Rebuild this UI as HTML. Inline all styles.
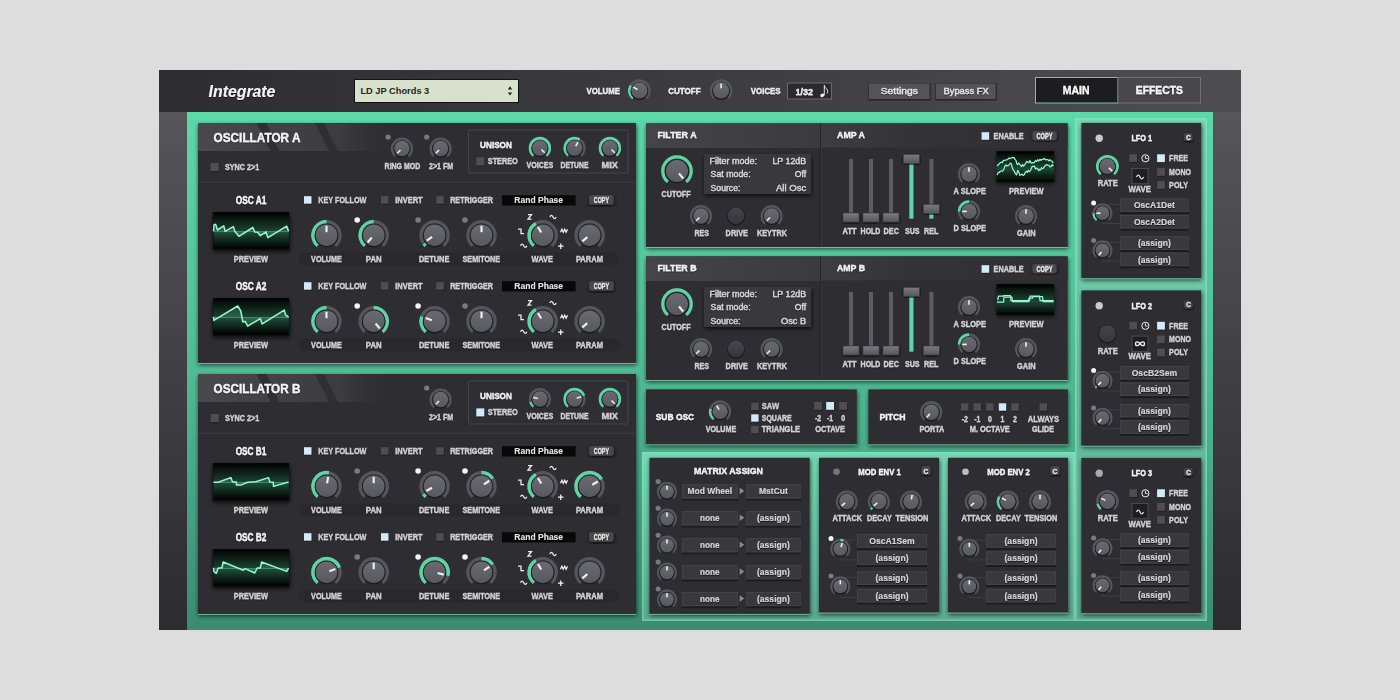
<!DOCTYPE html><html><head><meta charset="utf-8"><style>html,body{margin:0;padding:0;background:#dddddd;overflow:hidden}</style></head><body><svg width="1400" height="700" viewBox="0 0 1400 700" style="display:block;font-family:'Liberation Sans',sans-serif">
<defs>
<linearGradient id="hdr" x1="0" x2="1" y1="0" y2="0"><stop offset="0" stop-color="#2d2c30"/><stop offset="0.45" stop-color="#3b3a3f"/><stop offset="1" stop-color="#4e4e52"/></linearGradient>
<linearGradient id="strip" x1="0" x2="0" y1="0" y2="1"><stop offset="0" stop-color="#55555a"/><stop offset="1" stop-color="#2c2b2f"/></linearGradient>
<linearGradient id="grn" x1="0" x2="0" y1="0" y2="1"><stop offset="0" stop-color="#5cd8a9"/><stop offset="0.5" stop-color="#50bb95"/><stop offset="1" stop-color="#3a8c70"/></linearGradient>
<linearGradient id="grn2" x1="0" x2="0" y1="0" y2="1"><stop offset="0" stop-color="#72d9b3"/><stop offset="1" stop-color="#5caa91"/></linearGradient>
<linearGradient id="kb" x1="0" x2="0" y1="0" y2="1"><stop offset="0" stop-color="#6a6a72"/><stop offset="1" stop-color="#58585f"/></linearGradient>
<linearGradient id="kbd" x1="0" x2="0" y1="0" y2="1"><stop offset="0" stop-color="#45454b"/><stop offset="1" stop-color="#35353a"/></linearGradient>
<linearGradient id="prev" x1="0" x2="0" y1="0" y2="1"><stop offset="0" stop-color="#000"/><stop offset="0.52" stop-color="#1c4232"/><stop offset="0.56" stop-color="#1e4a38"/><stop offset="1" stop-color="#000"/></linearGradient>
<linearGradient id="prev2" x1="0" x2="0" y1="0" y2="1"><stop offset="0" stop-color="#000"/><stop offset="0.6" stop-color="#0c2a1f"/><stop offset="1" stop-color="#12392b"/></linearGradient>
<linearGradient id="oschdr" x1="0" x2="1" y1="0" y2="0"><stop offset="0" stop-color="#49484d"/><stop offset="0.75" stop-color="#3c3b40"/><stop offset="1" stop-color="#333236" stop-opacity="0"/></linearGradient>
<linearGradient id="fhdr" x1="0" x2="1" y1="0" y2="0"><stop offset="0" stop-color="#454449"/><stop offset="1" stop-color="#3b3a3f"/></linearGradient>
<linearGradient id="ahdr" x1="0" x2="1" y1="0" y2="0"><stop offset="0" stop-color="#3e3d42"/><stop offset="0.35" stop-color="#343338"/><stop offset="1" stop-color="#2f2f33"/></linearGradient>
<linearGradient id="sl" x1="0" x2="0" y1="0" y2="1"><stop offset="0" stop-color="#7a7a80"/><stop offset="1" stop-color="#56565c"/></linearGradient>
<filter id="ts" x="-20%" y="-40%" width="140%" height="180%"><feDropShadow dx="0" dy="0.7" stdDeviation="0.6" flood-color="#000" flood-opacity="0.85"/></filter>
<filter id="ps" x="-10%" y="-10%" width="120%" height="125%"><feDropShadow dx="0.5" dy="2" stdDeviation="2" flood-color="#000" flood-opacity="0.7"/></filter>
</defs>
<rect x="0.00" y="0.00" width="1400.00" height="700.00" fill="#dddddd" />
<rect x="159.00" y="70.00" width="1082.00" height="42.00" fill="url(#hdr)" />
<rect x="159.00" y="112.00" width="28.00" height="518.00" fill="url(#strip)" />
<rect x="1213.00" y="112.00" width="28.00" height="518.00" fill="url(#strip)" />
<rect x="187.00" y="112.00" width="1026.00" height="518.00" fill="url(#grn)" />
<rect x="1075.00" y="118.00" width="132.00" height="503.00" fill="url(#grn2)" />
<rect x="642.00" y="452.00" width="433.00" height="169.00" fill="url(#grn2)" />
<rect x="1075.8" y="118.8" width="130.4" height="501.4" fill="none" stroke="#8fe6c6" stroke-width="1.4" opacity="0.6"/>
<rect x="642.8" y="452.8" width="431.4" height="167.4" fill="none" stroke="#8fe6c6" stroke-width="1.4" opacity="0.5"/>
<text x="242.00" y="96.70" font-size="16.5" font-weight="bold" fill="#f4f4f4" text-anchor="middle" textLength="66.84" lengthAdjust="spacingAndGlyphs" style="font-style:italic;" filter="url(#ts)" >Integrate</text>
<rect x="354.5" y="79.5" width="164" height="23" fill="#d7e1cc" stroke="#111" stroke-width="1"/>
<text x="394.85" y="94.30" font-size="9.8" font-weight="bold" fill="#26261f" text-anchor="middle" textLength="68.88" lengthAdjust="spacingAndGlyphs" style=""  >LD JP Chords 3</text>
<path d="M507.8,89.4 L510,86.2 L512.2,89.4 Z M507.8,92.4 L510,95.6 L512.2,92.4 Z" fill="#222"/>
<text x="603.25" y="94.30" font-size="9" font-weight="bold" fill="#ececec" text-anchor="middle" textLength="33.48" lengthAdjust="spacingAndGlyphs" style="" filter="url(#ts)"  stroke="#ececec" stroke-width="0.3">VOLUME</text>
<path d="M632.97,98.26 A10.00,10.00 0 1 1 645.83,98.26" fill="none" stroke="#55555b" stroke-width="2.6" stroke-linecap="butt"/>
<path d="M632.97,98.26 A10.00,10.00 0 0 1 630.74,85.60" fill="none" stroke="#5fd4a3" stroke-width="2.8000000000000003" stroke-linecap="butt"/>
<circle cx="639.40" cy="91.20" r="8.90" fill="#1d1d21"/>
<circle cx="639.40" cy="90.60" r="8.00" fill="url(#kb)"/>
<line x1="637.46" y1="89.48" x2="633.30" y2="87.08" stroke="#efefef" stroke-width="1.60" stroke-linecap="butt"/>
<text x="684.45" y="94.30" font-size="9" font-weight="bold" fill="#ececec" text-anchor="middle" textLength="32.47" lengthAdjust="spacingAndGlyphs" style="" filter="url(#ts)"  stroke="#ececec" stroke-width="0.3">CUTOFF</text>
<path d="M714.67,98.26 A10.00,10.00 0 1 1 727.53,98.26" fill="none" stroke="#55555b" stroke-width="2.6" stroke-linecap="butt"/>
<circle cx="721.10" cy="91.20" r="8.90" fill="#1d1d21"/>
<circle cx="721.10" cy="90.60" r="8.00" fill="url(#kb)"/>
<line x1="721.10" y1="88.36" x2="721.10" y2="83.56" stroke="#efefef" stroke-width="1.60" stroke-linecap="butt"/>
<text x="765.70" y="94.30" font-size="9" font-weight="bold" fill="#ececec" text-anchor="middle" textLength="29.79" lengthAdjust="spacingAndGlyphs" style="" filter="url(#ts)"  stroke="#ececec" stroke-width="0.3">VOICES</text>
<rect x="787.5" y="83" width="44" height="16" fill="#2a2a2d" stroke="#6a6a6e" stroke-width="1"/>
<text x="804.20" y="94.60" font-size="8.4" font-weight="bold" fill="#ececec" text-anchor="middle" textLength="17.56" lengthAdjust="spacingAndGlyphs" style="" filter="url(#ts)"  stroke="#ececec" stroke-width="0.3">1/32</text>
<ellipse cx="822.4" cy="95.3" rx="2.2" ry="1.7" transform="rotate(-25 822.4 95.3)" fill="#f0f0f0"/><path d="M824.3,95 V85.2 Q825,88 827.2,89.6 Q828.4,91 827,93.4" fill="none" stroke="#f0f0f0" stroke-width="0.9"/>
<rect x="868.5" y="83" width="62.10000000000002" height="17.5" fill="#222225"/>
<rect x="869" y="83.4" width="60.60000000000002" height="15.7" fill="#545458"/>
<text x="899.30" y="94.10" font-size="9.3" font-weight="normal" fill="#e6e6e6" text-anchor="middle" textLength="37.23" lengthAdjust="spacingAndGlyphs" style="" filter="url(#ts)" stroke="#e6e6e6" stroke-width="0.35">Settings</text>
<rect x="935.2" y="83" width="61.5" height="17.5" fill="#222225"/>
<rect x="935.7" y="83.4" width="60.0" height="15.7" fill="#545458"/>
<text x="966.10" y="94.10" font-size="9.3" font-weight="normal" fill="#e6e6e6" text-anchor="middle" textLength="45.05" lengthAdjust="spacingAndGlyphs" style="" filter="url(#ts)" stroke="#e6e6e6" stroke-width="0.35">Bypass FX</text>
<rect x="1035.5" y="77.5" width="82.5" height="25.5" fill="#1d1c1f" stroke="#6fc7a4" stroke-width="1"/>
<rect x="1118" y="77.5" width="82.5" height="25.5" fill="#48484c" stroke="#707074" stroke-width="1"/>
<text x="1076.10" y="94.40" font-size="11.5" font-weight="bold" fill="#f4f4f4" text-anchor="middle" textLength="26.75" lengthAdjust="spacingAndGlyphs" style="" filter="url(#ts)"  stroke="#f4f4f4" stroke-width="0.3">MAIN</text>
<text x="1159.40" y="94.40" font-size="11.5" font-weight="bold" fill="#f4f4f4" text-anchor="middle" textLength="47.15" lengthAdjust="spacingAndGlyphs" style="" filter="url(#ts)"  stroke="#f4f4f4" stroke-width="0.3">EFFECTS</text>
<rect x="198" y="123" width="438" height="240" fill="#2f2f33" filter="url(#ps)"/>
<rect x="198" y="363.00" width="438" height="1" fill="#8ad6b8" opacity="0.75"/>
<rect x="198" y="123" width="190" height="28" fill="url(#oschdr)"/>
<polygon points="256.4,123 266.4,123 279.3,151 270.7,151" fill="#2f2e33"/>
<polygon points="315,123 323.6,123 337.9,151 329.3,151" fill="#2f2e33"/>
<text x="257.00" y="141.70" font-size="12.8" font-weight="bold" fill="#f2f2f2" text-anchor="middle" textLength="86.80" lengthAdjust="spacingAndGlyphs" style="" filter="url(#ts)"  stroke="#f2f2f2" stroke-width="0.3">OSCILLATOR A</text>
<rect x="211.30" y="164.20" width="8" height="8" fill="#1e1e21" opacity="0.7"/>
<rect x="210.70" y="163.00" width="8" height="8" fill="#4f4f53"/>
<text x="242.15" y="170.00" font-size="8.2" font-weight="bold" fill="#cfcfd2" text-anchor="middle" textLength="34.32" lengthAdjust="spacingAndGlyphs" style="" filter="url(#ts)"  stroke="#cfcfd2" stroke-width="0.3">SYNC 2&gt;1</text>
<circle cx="388.10" cy="137.00" r="2.6" fill="#7a7a7e"/>
<path d="M395.70,156.01 A9.80,9.80 0 1 1 408.30,156.01" fill="none" stroke="#55555b" stroke-width="2.6" stroke-linecap="butt"/>
<circle cx="402.00" cy="149.10" r="8.60" fill="#1d1d21"/>
<circle cx="402.00" cy="148.50" r="7.70" fill="url(#kb)"/>
<line x1="400.48" y1="150.02" x2="397.21" y2="153.29" stroke="#efefef" stroke-width="1.60" stroke-linecap="butt"/>
<text x="402.45" y="169.20" font-size="8.2" font-weight="bold" fill="#cfcfd2" text-anchor="middle" textLength="35.71" lengthAdjust="spacingAndGlyphs" style="" filter="url(#ts)"  stroke="#cfcfd2" stroke-width="0.3">RING MOD</text>
<circle cx="426.70" cy="137.00" r="2.6" fill="#7a7a7e"/>
<path d="M434.30,156.01 A9.80,9.80 0 1 1 446.90,156.01" fill="none" stroke="#55555b" stroke-width="2.6" stroke-linecap="butt"/>
<circle cx="440.60" cy="149.10" r="8.60" fill="#1d1d21"/>
<circle cx="440.60" cy="148.50" r="7.70" fill="url(#kb)"/>
<line x1="439.08" y1="150.02" x2="435.81" y2="153.29" stroke="#efefef" stroke-width="1.60" stroke-linecap="butt"/>
<text x="441.05" y="169.20" font-size="8.2" font-weight="bold" fill="#cfcfd2" text-anchor="middle" textLength="24.08" lengthAdjust="spacingAndGlyphs" style="" filter="url(#ts)"  stroke="#cfcfd2" stroke-width="0.3">2&gt;1 FM</text>
<rect x="468.5" y="130" width="159.5" height="43" fill="#2f2f33" stroke="#47474b" stroke-width="1" rx="1.5"/>
<text x="496.00" y="148.00" font-size="9.6" font-weight="bold" fill="#f2f2f2" text-anchor="middle" textLength="31.79" lengthAdjust="spacingAndGlyphs" style="" filter="url(#ts)"  stroke="#f2f2f2" stroke-width="0.3">UNISON</text>
<rect x="476.90" y="158.60" width="8" height="8" fill="#1e1e21" opacity="0.7"/>
<rect x="476.30" y="157.40" width="8" height="8" fill="#4f4f53"/>
<text x="502.75" y="164.40" font-size="8.2" font-weight="bold" fill="#cfcfd2" text-anchor="middle" textLength="29.91" lengthAdjust="spacingAndGlyphs" style="" filter="url(#ts)"  stroke="#cfcfd2" stroke-width="0.3">STEREO</text>
<path d="M533.60,155.51 A9.80,9.80 0 1 1 546.20,155.51" fill="none" stroke="#55555b" stroke-width="2.6" stroke-linecap="butt"/>
<path d="M533.60,155.51 A9.80,9.80 0 1 1 546.20,155.51" fill="none" stroke="#5fd4a3" stroke-width="2.8000000000000003" stroke-linecap="butt"/>
<circle cx="539.90" cy="148.60" r="8.60" fill="#1d1d21"/>
<circle cx="539.90" cy="148.00" r="7.70" fill="url(#kb)"/>
<line x1="541.42" y1="149.52" x2="544.69" y2="152.79" stroke="#efefef" stroke-width="1.60" stroke-linecap="butt"/>
<text x="539.90" y="167.80" font-size="8.2" font-weight="bold" fill="#cfcfd2" text-anchor="middle" textLength="26.99" lengthAdjust="spacingAndGlyphs" style="" filter="url(#ts)"  stroke="#cfcfd2" stroke-width="0.3">VOICES</text>
<path d="M568.30,155.51 A9.80,9.80 0 1 1 580.90,155.51" fill="none" stroke="#55555b" stroke-width="2.6" stroke-linecap="butt"/>
<path d="M568.30,155.51 A9.80,9.80 0 0 1 579.50,139.51" fill="none" stroke="#5fd4a3" stroke-width="2.8000000000000003" stroke-linecap="butt"/>
<circle cx="574.60" cy="148.60" r="8.60" fill="#1d1d21"/>
<circle cx="574.60" cy="148.00" r="7.70" fill="url(#kb)"/>
<line x1="575.68" y1="146.13" x2="577.99" y2="142.13" stroke="#efefef" stroke-width="1.60" stroke-linecap="butt"/>
<text x="574.50" y="167.80" font-size="8.2" font-weight="bold" fill="#cfcfd2" text-anchor="middle" textLength="28.01" lengthAdjust="spacingAndGlyphs" style="" filter="url(#ts)"  stroke="#cfcfd2" stroke-width="0.3">DETUNE</text>
<path d="M603.60,155.51 A9.80,9.80 0 1 1 616.20,155.51" fill="none" stroke="#55555b" stroke-width="2.6" stroke-linecap="butt"/>
<path d="M603.60,155.51 A9.80,9.80 0 1 1 616.20,155.51" fill="none" stroke="#5fd4a3" stroke-width="2.8000000000000003" stroke-linecap="butt"/>
<circle cx="609.90" cy="148.60" r="8.60" fill="#1d1d21"/>
<circle cx="609.90" cy="148.00" r="7.70" fill="url(#kb)"/>
<line x1="611.42" y1="149.52" x2="614.69" y2="152.79" stroke="#efefef" stroke-width="1.60" stroke-linecap="butt"/>
<text x="609.75" y="167.80" font-size="8.2" font-weight="bold" fill="#cfcfd2" text-anchor="middle" textLength="16.48" lengthAdjust="spacingAndGlyphs" style="" filter="url(#ts)"  stroke="#cfcfd2" stroke-width="0.3">MIX</text>
<line x1="198" y1="182.2" x2="636" y2="182.2" stroke="#3f3f43" stroke-width="1"/>
<text x="251.05" y="203.90" font-size="10" font-weight="bold" fill="#f2f2f2" text-anchor="middle" textLength="30.67" lengthAdjust="spacingAndGlyphs" style="" filter="url(#ts)"  stroke="#f2f2f2" stroke-width="0.3">OSC A1</text>
<rect x="212.5" y="212.5" width="77" height="37.5" fill="#111" filter="url(#ps)"/>
<rect x="213.5" y="212.1" width="75.4" height="36.5" fill="url(#prev)"/>
<path d="M213.5,231.3 L214.1,224.4 L215.7,224.4 L217.5,230.0 L223.8,225.9 L225.1,231.3 L233.3,226.6 L234.8,231.3 L238.9,236.3 L252.8,227.5 L254.7,231.9 L257.8,232.2 L260.3,235.7 L266.0,231.9 L267.9,237.6 L286.7,226.2 L288.6,231.3 L288.6,231.6 L213.5,231.6 Z" fill="#5ad6a0" opacity="0.22"/>
<line x1="213.5" y1="231.6" x2="288.6" y2="231.6" stroke="#5fcf9f" stroke-width="0.8" opacity="0.6"/>
<path d="M213.5,231.3 L214.1,224.4 L215.7,224.4 L217.5,230.0 L223.8,225.9 L225.1,231.3 L233.3,226.6 L234.8,231.3 L238.9,236.3 L252.8,227.5 L254.7,231.9 L257.8,232.2 L260.3,235.7 L266.0,231.9 L267.9,237.6 L286.7,226.2 L288.6,231.3" fill="none" stroke="#9af7cf" stroke-width="1.5" stroke-linejoin="round"/>
<text x="250.85" y="262.00" font-size="8.2" font-weight="bold" fill="#cfcfd2" text-anchor="middle" textLength="34.04" lengthAdjust="spacingAndGlyphs" style="" filter="url(#ts)"  stroke="#cfcfd2" stroke-width="0.3">PREVIEW</text>
<rect x="304.60" y="197.40" width="7.5" height="7.5" fill="#1e1e21" opacity="0.7"/>
<rect x="304.00" y="196.20" width="7.5" height="7.5" fill="#d4eaf8"/>
<text x="342.30" y="202.90" font-size="8.2" font-weight="bold" fill="#cfcfd2" text-anchor="middle" textLength="48.18" lengthAdjust="spacingAndGlyphs" style="" filter="url(#ts)"  stroke="#cfcfd2" stroke-width="0.3">KEY FOLLOW</text>
<rect x="381.60" y="197.40" width="7.5" height="7.5" fill="#1e1e21" opacity="0.7"/>
<rect x="381.00" y="196.20" width="7.5" height="7.5" fill="#4f4f53"/>
<text x="408.90" y="202.90" font-size="8.2" font-weight="bold" fill="#cfcfd2" text-anchor="middle" textLength="27.38" lengthAdjust="spacingAndGlyphs" style="" filter="url(#ts)"  stroke="#cfcfd2" stroke-width="0.3">INVERT</text>
<rect x="436.90" y="197.40" width="7.5" height="7.5" fill="#1e1e21" opacity="0.7"/>
<rect x="436.30" y="196.20" width="7.5" height="7.5" fill="#4f4f53"/>
<text x="471.60" y="202.90" font-size="8.2" font-weight="bold" fill="#cfcfd2" text-anchor="middle" textLength="42.83" lengthAdjust="spacingAndGlyphs" style="" filter="url(#ts)"  stroke="#cfcfd2" stroke-width="0.3">RETRIGGER</text>
<rect x="502.00" y="195.20" width="73.60" height="10.30" fill="#080808" />
<text x="538.70" y="203.30" font-size="9.2" font-weight="bold" fill="#e2e2e2" text-anchor="middle" textLength="48.83" lengthAdjust="spacingAndGlyphs" style="" filter="url(#ts)" >Rand Phase</text>
<rect x="589" y="194.9" width="24.7" height="9.8" rx="3" fill="#48484c" filter="url(#ps)"/>
<text x="601.40" y="203.10" font-size="8.8" font-weight="bold" fill="#e4e4e4" text-anchor="middle" textLength="15.22" lengthAdjust="spacingAndGlyphs" style="" filter="url(#ts)"  stroke="#e4e4e4" stroke-width="0.3">COPY</text>
<rect x="298.6" y="252.6" width="321" height="12.6" rx="6.3" fill="#29292c"/>
<path d="M317.76,245.62 A13.60,13.60 0 1 1 335.24,245.62" fill="none" stroke="#55555b" stroke-width="3.3" stroke-linecap="butt"/>
<path d="M317.76,245.62 A13.60,13.60 0 0 1 326.50,221.60" fill="none" stroke="#5fd4a3" stroke-width="3.5" stroke-linecap="butt"/>
<circle cx="326.50" cy="235.80" r="11.70" fill="#1d1d21"/>
<circle cx="326.50" cy="235.20" r="10.80" fill="url(#kb)"/>
<line x1="326.50" y1="232.18" x2="326.50" y2="225.70" stroke="#efefef" stroke-width="2.16" stroke-linecap="butt"/>
<text x="326.45" y="262.00" font-size="8.2" font-weight="bold" fill="#cfcfd2" text-anchor="middle" textLength="30.68" lengthAdjust="spacingAndGlyphs" style="" filter="url(#ts)"  stroke="#cfcfd2" stroke-width="0.3">VOLUME</text>
<path d="M364.96,245.62 A13.60,13.60 0 1 1 382.44,245.62" fill="none" stroke="#55555b" stroke-width="3.3" stroke-linecap="butt"/>
<path d="M364.96,245.62 A13.60,13.60 0 0 1 373.70,221.60" fill="none" stroke="#5fd4a3" stroke-width="3.5" stroke-linecap="butt"/>
<circle cx="373.70" cy="235.80" r="11.70" fill="#1d1d21"/>
<circle cx="373.70" cy="235.20" r="10.80" fill="url(#kb)"/>
<line x1="371.76" y1="237.52" x2="367.59" y2="242.48" stroke="#efefef" stroke-width="2.16" stroke-linecap="butt"/>
<text x="373.70" y="262.00" font-size="8.2" font-weight="bold" fill="#cfcfd2" text-anchor="middle" textLength="15.78" lengthAdjust="spacingAndGlyphs" style="" filter="url(#ts)"  stroke="#cfcfd2" stroke-width="0.3">PAN</text>
<circle cx="357.20" cy="220.00" r="2.8" fill="#f4f4f4"/>
<path d="M425.86,245.62 A13.60,13.60 0 1 1 443.34,245.62" fill="none" stroke="#55555b" stroke-width="3.3" stroke-linecap="butt"/>
<path d="M425.86,245.62 A13.60,13.60 0 0 1 423.88,243.57" fill="none" stroke="#5fd4a3" stroke-width="3.5" stroke-linecap="butt"/>
<circle cx="434.60" cy="235.80" r="11.70" fill="#1d1d21"/>
<circle cx="434.60" cy="235.20" r="10.80" fill="url(#kb)"/>
<line x1="432.12" y1="236.93" x2="426.81" y2="240.65" stroke="#efefef" stroke-width="2.16" stroke-linecap="butt"/>
<text x="434.20" y="262.00" font-size="8.2" font-weight="bold" fill="#cfcfd2" text-anchor="middle" textLength="30.41" lengthAdjust="spacingAndGlyphs" style="" filter="url(#ts)"  stroke="#cfcfd2" stroke-width="0.3">DETUNE</text>
<circle cx="418.10" cy="220.00" r="2.8" fill="#7a7a7e"/>
<path d="M472.76,245.62 A13.60,13.60 0 1 1 490.24,245.62" fill="none" stroke="#55555b" stroke-width="3.3" stroke-linecap="butt"/>
<circle cx="481.50" cy="235.80" r="11.70" fill="#1d1d21"/>
<circle cx="481.50" cy="235.20" r="10.80" fill="url(#kb)"/>
<line x1="481.50" y1="232.18" x2="481.50" y2="225.70" stroke="#efefef" stroke-width="2.16" stroke-linecap="butt"/>
<text x="481.30" y="262.00" font-size="8.2" font-weight="bold" fill="#cfcfd2" text-anchor="middle" textLength="37.43" lengthAdjust="spacingAndGlyphs" style="" filter="url(#ts)"  stroke="#cfcfd2" stroke-width="0.3">SEMITONE</text>
<circle cx="465.00" cy="220.00" r="2.8" fill="#7a7a7e"/>
<path d="M533.96,245.62 A13.60,13.60 0 1 1 551.44,245.62" fill="none" stroke="#55555b" stroke-width="3.3" stroke-linecap="butt"/>
<path d="M533.96,245.62 A13.60,13.60 0 0 1 535.90,223.42" fill="none" stroke="#5fd4a3" stroke-width="3.5" stroke-linecap="butt"/>
<circle cx="542.70" cy="235.80" r="11.70" fill="#1d1d21"/>
<circle cx="542.70" cy="235.20" r="10.80" fill="url(#kb)"/>
<line x1="541.19" y1="232.58" x2="537.95" y2="226.97" stroke="#efefef" stroke-width="2.16" stroke-linecap="butt"/>
<text x="542.25" y="262.00" font-size="8.2" font-weight="bold" fill="#cfcfd2" text-anchor="middle" textLength="21.31" lengthAdjust="spacingAndGlyphs" style="" filter="url(#ts)"  stroke="#cfcfd2" stroke-width="0.3">WAVE</text>
<path d="M580.86,245.62 A13.60,13.60 0 1 1 598.34,245.62" fill="none" stroke="#55555b" stroke-width="3.3" stroke-linecap="butt"/>
<circle cx="589.60" cy="235.80" r="11.70" fill="#1d1d21"/>
<circle cx="589.60" cy="235.20" r="10.80" fill="url(#kb)"/>
<line x1="587.28" y1="237.14" x2="582.32" y2="241.31" stroke="#efefef" stroke-width="2.16" stroke-linecap="butt"/>
<text x="589.45" y="262.00" font-size="8.2" font-weight="bold" fill="#cfcfd2" text-anchor="middle" textLength="27.12" lengthAdjust="spacingAndGlyphs" style="" filter="url(#ts)"  stroke="#cfcfd2" stroke-width="0.3">PARAM</text>
<path d="M528,214.7 h3.5 l-3.5,4.5 h3.5 M549.8,217.0 q1.6,-3.2 3.2,0 q1.6,3.2 3.2,0 M518,229.2 h3 v4.5 h3 M560.5,232.2 l1.4,-3 l1.4,3 l1.4,-3 l1.4,3 l1.4,-3 M520.5,245.7 q1.6,-3.2 3.2,0 q1.6,3.2 3.2,0 M558,246.2 h5.5 M560.75,243.45 v5.5" fill="none" stroke="#f0f0f0" stroke-width="1.3"/>
<text x="251.05" y="289.90" font-size="10" font-weight="bold" fill="#f2f2f2" text-anchor="middle" textLength="30.67" lengthAdjust="spacingAndGlyphs" style="" filter="url(#ts)"  stroke="#f2f2f2" stroke-width="0.3">OSC A2</text>
<rect x="212.5" y="298.5" width="77" height="37.5" fill="#111" filter="url(#ps)"/>
<rect x="213.5" y="298.1" width="75.4" height="36.5" fill="url(#prev)"/>
<path d="M213.5,316.7 L213.8,320.4 L237.7,306.0 L240.8,311.0 L242.7,321.7 L245.2,321.4 L247.7,326.1 L260.3,318.6 L262.2,323.9 L284.2,310.1 L285.5,314.9 L288.6,317.1 L288.6,317.6 L213.5,317.6 Z" fill="#5ad6a0" opacity="0.22"/>
<line x1="213.5" y1="317.6" x2="288.6" y2="317.6" stroke="#5fcf9f" stroke-width="0.8" opacity="0.6"/>
<path d="M213.5,316.7 L213.8,320.4 L237.7,306.0 L240.8,311.0 L242.7,321.7 L245.2,321.4 L247.7,326.1 L260.3,318.6 L262.2,323.9 L284.2,310.1 L285.5,314.9 L288.6,317.1" fill="none" stroke="#9af7cf" stroke-width="1.5" stroke-linejoin="round"/>
<text x="250.85" y="348.00" font-size="8.2" font-weight="bold" fill="#cfcfd2" text-anchor="middle" textLength="34.04" lengthAdjust="spacingAndGlyphs" style="" filter="url(#ts)"  stroke="#cfcfd2" stroke-width="0.3">PREVIEW</text>
<rect x="304.60" y="283.40" width="7.5" height="7.5" fill="#1e1e21" opacity="0.7"/>
<rect x="304.00" y="282.20" width="7.5" height="7.5" fill="#d4eaf8"/>
<text x="342.30" y="288.90" font-size="8.2" font-weight="bold" fill="#cfcfd2" text-anchor="middle" textLength="48.18" lengthAdjust="spacingAndGlyphs" style="" filter="url(#ts)"  stroke="#cfcfd2" stroke-width="0.3">KEY FOLLOW</text>
<rect x="381.60" y="283.40" width="7.5" height="7.5" fill="#1e1e21" opacity="0.7"/>
<rect x="381.00" y="282.20" width="7.5" height="7.5" fill="#4f4f53"/>
<text x="408.90" y="288.90" font-size="8.2" font-weight="bold" fill="#cfcfd2" text-anchor="middle" textLength="27.38" lengthAdjust="spacingAndGlyphs" style="" filter="url(#ts)"  stroke="#cfcfd2" stroke-width="0.3">INVERT</text>
<rect x="436.90" y="283.40" width="7.5" height="7.5" fill="#1e1e21" opacity="0.7"/>
<rect x="436.30" y="282.20" width="7.5" height="7.5" fill="#4f4f53"/>
<text x="471.60" y="288.90" font-size="8.2" font-weight="bold" fill="#cfcfd2" text-anchor="middle" textLength="42.83" lengthAdjust="spacingAndGlyphs" style="" filter="url(#ts)"  stroke="#cfcfd2" stroke-width="0.3">RETRIGGER</text>
<rect x="502.00" y="281.20" width="73.60" height="10.30" fill="#080808" />
<text x="538.70" y="289.30" font-size="9.2" font-weight="bold" fill="#e2e2e2" text-anchor="middle" textLength="48.83" lengthAdjust="spacingAndGlyphs" style="" filter="url(#ts)" >Rand Phase</text>
<rect x="589" y="280.9" width="24.7" height="9.8" rx="3" fill="#48484c" filter="url(#ps)"/>
<text x="601.40" y="289.10" font-size="8.8" font-weight="bold" fill="#e4e4e4" text-anchor="middle" textLength="15.22" lengthAdjust="spacingAndGlyphs" style="" filter="url(#ts)"  stroke="#e4e4e4" stroke-width="0.3">COPY</text>
<rect x="298.6" y="338.6" width="321" height="12.6" rx="6.3" fill="#29292c"/>
<path d="M317.76,331.62 A13.60,13.60 0 1 1 335.24,331.62" fill="none" stroke="#55555b" stroke-width="3.3" stroke-linecap="butt"/>
<path d="M317.76,331.62 A13.60,13.60 0 0 1 326.50,307.60" fill="none" stroke="#5fd4a3" stroke-width="3.5" stroke-linecap="butt"/>
<circle cx="326.50" cy="321.80" r="11.70" fill="#1d1d21"/>
<circle cx="326.50" cy="321.20" r="10.80" fill="url(#kb)"/>
<line x1="326.50" y1="318.18" x2="326.50" y2="311.70" stroke="#efefef" stroke-width="2.16" stroke-linecap="butt"/>
<text x="326.45" y="348.00" font-size="8.2" font-weight="bold" fill="#cfcfd2" text-anchor="middle" textLength="30.68" lengthAdjust="spacingAndGlyphs" style="" filter="url(#ts)"  stroke="#cfcfd2" stroke-width="0.3">VOLUME</text>
<path d="M364.96,331.62 A13.60,13.60 0 1 1 382.44,331.62" fill="none" stroke="#55555b" stroke-width="3.3" stroke-linecap="butt"/>
<path d="M373.70,307.60 A13.60,13.60 0 0 1 382.44,331.62" fill="none" stroke="#5fd4a3" stroke-width="3.5" stroke-linecap="butt"/>
<circle cx="373.70" cy="321.80" r="11.70" fill="#1d1d21"/>
<circle cx="373.70" cy="321.20" r="10.80" fill="url(#kb)"/>
<line x1="375.64" y1="323.52" x2="379.81" y2="328.48" stroke="#efefef" stroke-width="2.16" stroke-linecap="butt"/>
<text x="373.70" y="348.00" font-size="8.2" font-weight="bold" fill="#cfcfd2" text-anchor="middle" textLength="15.78" lengthAdjust="spacingAndGlyphs" style="" filter="url(#ts)"  stroke="#cfcfd2" stroke-width="0.3">PAN</text>
<circle cx="357.20" cy="306.00" r="2.8" fill="#f4f4f4"/>
<path d="M425.86,331.62 A13.60,13.60 0 1 1 443.34,331.62" fill="none" stroke="#55555b" stroke-width="3.3" stroke-linecap="butt"/>
<path d="M425.86,331.62 A13.60,13.60 0 0 1 421.82,316.55" fill="none" stroke="#5fd4a3" stroke-width="3.5" stroke-linecap="butt"/>
<circle cx="434.60" cy="321.80" r="11.70" fill="#1d1d21"/>
<circle cx="434.60" cy="321.20" r="10.80" fill="url(#kb)"/>
<line x1="431.76" y1="320.17" x2="425.67" y2="317.95" stroke="#efefef" stroke-width="2.16" stroke-linecap="butt"/>
<text x="434.20" y="348.00" font-size="8.2" font-weight="bold" fill="#cfcfd2" text-anchor="middle" textLength="30.41" lengthAdjust="spacingAndGlyphs" style="" filter="url(#ts)"  stroke="#cfcfd2" stroke-width="0.3">DETUNE</text>
<circle cx="418.10" cy="306.00" r="2.8" fill="#f4f4f4"/>
<path d="M472.76,331.62 A13.60,13.60 0 1 1 490.24,331.62" fill="none" stroke="#55555b" stroke-width="3.3" stroke-linecap="butt"/>
<circle cx="481.50" cy="321.80" r="11.70" fill="#1d1d21"/>
<circle cx="481.50" cy="321.20" r="10.80" fill="url(#kb)"/>
<line x1="481.50" y1="318.18" x2="481.50" y2="311.70" stroke="#efefef" stroke-width="2.16" stroke-linecap="butt"/>
<text x="481.30" y="348.00" font-size="8.2" font-weight="bold" fill="#cfcfd2" text-anchor="middle" textLength="37.43" lengthAdjust="spacingAndGlyphs" style="" filter="url(#ts)"  stroke="#cfcfd2" stroke-width="0.3">SEMITONE</text>
<circle cx="465.00" cy="306.00" r="2.8" fill="#7a7a7e"/>
<path d="M533.96,331.62 A13.60,13.60 0 1 1 551.44,331.62" fill="none" stroke="#55555b" stroke-width="3.3" stroke-linecap="butt"/>
<path d="M533.96,331.62 A13.60,13.60 0 0 1 535.90,309.42" fill="none" stroke="#5fd4a3" stroke-width="3.5" stroke-linecap="butt"/>
<circle cx="542.70" cy="321.80" r="11.70" fill="#1d1d21"/>
<circle cx="542.70" cy="321.20" r="10.80" fill="url(#kb)"/>
<line x1="541.19" y1="318.58" x2="537.95" y2="312.97" stroke="#efefef" stroke-width="2.16" stroke-linecap="butt"/>
<text x="542.25" y="348.00" font-size="8.2" font-weight="bold" fill="#cfcfd2" text-anchor="middle" textLength="21.31" lengthAdjust="spacingAndGlyphs" style="" filter="url(#ts)"  stroke="#cfcfd2" stroke-width="0.3">WAVE</text>
<path d="M580.86,331.62 A13.60,13.60 0 1 1 598.34,331.62" fill="none" stroke="#55555b" stroke-width="3.3" stroke-linecap="butt"/>
<circle cx="589.60" cy="321.80" r="11.70" fill="#1d1d21"/>
<circle cx="589.60" cy="321.20" r="10.80" fill="url(#kb)"/>
<line x1="587.28" y1="323.14" x2="582.32" y2="327.31" stroke="#efefef" stroke-width="2.16" stroke-linecap="butt"/>
<text x="589.45" y="348.00" font-size="8.2" font-weight="bold" fill="#cfcfd2" text-anchor="middle" textLength="27.12" lengthAdjust="spacingAndGlyphs" style="" filter="url(#ts)"  stroke="#cfcfd2" stroke-width="0.3">PARAM</text>
<path d="M528,300.7 h3.5 l-3.5,4.5 h3.5 M549.8,303.0 q1.6,-3.2 3.2,0 q1.6,3.2 3.2,0 M518,315.2 h3 v4.5 h3 M560.5,318.2 l1.4,-3 l1.4,3 l1.4,-3 l1.4,3 l1.4,-3 M520.5,331.7 q1.6,-3.2 3.2,0 q1.6,3.2 3.2,0 M558,332.2 h5.5 M560.75,329.45 v5.5" fill="none" stroke="#f0f0f0" stroke-width="1.3"/>
<rect x="198" y="374" width="438" height="240" fill="#2f2f33" filter="url(#ps)"/>
<rect x="198" y="614.00" width="438" height="1" fill="#8ad6b8" opacity="0.75"/>
<rect x="198" y="374" width="190" height="28" fill="url(#oschdr)"/>
<polygon points="256.4,374 266.4,374 279.3,402 270.7,402" fill="#2f2e33"/>
<polygon points="315,374 323.6,374 337.9,402 329.3,402" fill="#2f2e33"/>
<text x="257.00" y="392.70" font-size="12.8" font-weight="bold" fill="#f2f2f2" text-anchor="middle" textLength="86.77" lengthAdjust="spacingAndGlyphs" style="" filter="url(#ts)"  stroke="#f2f2f2" stroke-width="0.3">OSCILLATOR B</text>
<rect x="211.30" y="415.20" width="8" height="8" fill="#1e1e21" opacity="0.7"/>
<rect x="210.70" y="414.00" width="8" height="8" fill="#4f4f53"/>
<text x="242.15" y="421.00" font-size="8.2" font-weight="bold" fill="#cfcfd2" text-anchor="middle" textLength="34.32" lengthAdjust="spacingAndGlyphs" style="" filter="url(#ts)"  stroke="#cfcfd2" stroke-width="0.3">SYNC 2&gt;1</text>
<circle cx="426.70" cy="388.00" r="2.6" fill="#7a7a7e"/>
<path d="M434.30,407.01 A9.80,9.80 0 1 1 446.90,407.01" fill="none" stroke="#55555b" stroke-width="2.6" stroke-linecap="butt"/>
<circle cx="440.60" cy="400.10" r="8.60" fill="#1d1d21"/>
<circle cx="440.60" cy="399.50" r="7.70" fill="url(#kb)"/>
<line x1="439.08" y1="401.02" x2="435.81" y2="404.29" stroke="#efefef" stroke-width="1.60" stroke-linecap="butt"/>
<text x="441.05" y="420.20" font-size="8.2" font-weight="bold" fill="#cfcfd2" text-anchor="middle" textLength="24.08" lengthAdjust="spacingAndGlyphs" style="" filter="url(#ts)"  stroke="#cfcfd2" stroke-width="0.3">2&gt;1 FM</text>
<rect x="468.5" y="381" width="159.5" height="43" fill="#2f2f33" stroke="#47474b" stroke-width="1" rx="1.5"/>
<text x="496.00" y="399.00" font-size="9.6" font-weight="bold" fill="#f2f2f2" text-anchor="middle" textLength="31.79" lengthAdjust="spacingAndGlyphs" style="" filter="url(#ts)"  stroke="#f2f2f2" stroke-width="0.3">UNISON</text>
<rect x="476.90" y="409.60" width="8" height="8" fill="#1e1e21" opacity="0.7"/>
<rect x="476.30" y="408.40" width="8" height="8" fill="#d4eaf8"/>
<text x="502.75" y="415.40" font-size="8.2" font-weight="bold" fill="#cfcfd2" text-anchor="middle" textLength="29.91" lengthAdjust="spacingAndGlyphs" style="" filter="url(#ts)"  stroke="#cfcfd2" stroke-width="0.3">STEREO</text>
<path d="M533.60,406.51 A9.80,9.80 0 1 1 546.20,406.51" fill="none" stroke="#55555b" stroke-width="2.6" stroke-linecap="butt"/>
<path d="M533.60,406.51 A9.80,9.80 0 0 1 530.58,402.03" fill="none" stroke="#5fd4a3" stroke-width="2.8000000000000003" stroke-linecap="butt"/>
<circle cx="539.90" cy="399.60" r="8.60" fill="#1d1d21"/>
<circle cx="539.90" cy="399.00" r="7.70" fill="url(#kb)"/>
<line x1="537.79" y1="398.55" x2="533.27" y2="397.59" stroke="#efefef" stroke-width="1.60" stroke-linecap="butt"/>
<text x="539.90" y="418.80" font-size="8.2" font-weight="bold" fill="#cfcfd2" text-anchor="middle" textLength="26.99" lengthAdjust="spacingAndGlyphs" style="" filter="url(#ts)"  stroke="#cfcfd2" stroke-width="0.3">VOICES</text>
<path d="M568.30,406.51 A9.80,9.80 0 1 1 580.90,406.51" fill="none" stroke="#55555b" stroke-width="2.6" stroke-linecap="butt"/>
<path d="M568.30,406.51 A9.80,9.80 0 1 1 583.81,395.65" fill="none" stroke="#5fd4a3" stroke-width="2.8000000000000003" stroke-linecap="butt"/>
<circle cx="574.60" cy="399.60" r="8.60" fill="#1d1d21"/>
<circle cx="574.60" cy="399.00" r="7.70" fill="url(#kb)"/>
<line x1="576.63" y1="398.26" x2="580.97" y2="396.68" stroke="#efefef" stroke-width="1.60" stroke-linecap="butt"/>
<text x="574.50" y="418.80" font-size="8.2" font-weight="bold" fill="#cfcfd2" text-anchor="middle" textLength="28.01" lengthAdjust="spacingAndGlyphs" style="" filter="url(#ts)"  stroke="#cfcfd2" stroke-width="0.3">DETUNE</text>
<path d="M603.60,406.51 A9.80,9.80 0 1 1 616.20,406.51" fill="none" stroke="#55555b" stroke-width="2.6" stroke-linecap="butt"/>
<path d="M603.60,406.51 A9.80,9.80 0 1 1 616.20,406.51" fill="none" stroke="#5fd4a3" stroke-width="2.8000000000000003" stroke-linecap="butt"/>
<circle cx="609.90" cy="399.60" r="8.60" fill="#1d1d21"/>
<circle cx="609.90" cy="399.00" r="7.70" fill="url(#kb)"/>
<line x1="611.42" y1="400.52" x2="614.69" y2="403.79" stroke="#efefef" stroke-width="1.60" stroke-linecap="butt"/>
<text x="609.75" y="418.80" font-size="8.2" font-weight="bold" fill="#cfcfd2" text-anchor="middle" textLength="16.48" lengthAdjust="spacingAndGlyphs" style="" filter="url(#ts)"  stroke="#cfcfd2" stroke-width="0.3">MIX</text>
<line x1="198" y1="433.2" x2="636" y2="433.2" stroke="#3f3f43" stroke-width="1"/>
<text x="251.05" y="454.90" font-size="10" font-weight="bold" fill="#f2f2f2" text-anchor="middle" textLength="30.73" lengthAdjust="spacingAndGlyphs" style="" filter="url(#ts)"  stroke="#f2f2f2" stroke-width="0.3">OSC B1</text>
<rect x="212.5" y="463.5" width="77" height="37.5" fill="#111" filter="url(#ps)"/>
<rect x="213.5" y="463.1" width="75.4" height="36.5" fill="url(#prev)"/>
<path d="M213.5,482.3 L218.2,482.3 L230.8,477.6 L232.6,482.0 L236.4,482.0 L236.4,485.1 L240.8,485.1 L247.7,482.3 L255.9,481.7 L268.5,477.6 L269.8,482.0 L273.2,482.3 L273.5,486.4 L288.6,482.0 L288.6,482.6 L213.5,482.6 Z" fill="#5ad6a0" opacity="0.22"/>
<line x1="213.5" y1="482.6" x2="288.6" y2="482.6" stroke="#5fcf9f" stroke-width="0.8" opacity="0.6"/>
<path d="M213.5,482.3 L218.2,482.3 L230.8,477.6 L232.6,482.0 L236.4,482.0 L236.4,485.1 L240.8,485.1 L247.7,482.3 L255.9,481.7 L268.5,477.6 L269.8,482.0 L273.2,482.3 L273.5,486.4 L288.6,482.0" fill="none" stroke="#9af7cf" stroke-width="1.5" stroke-linejoin="round"/>
<text x="250.85" y="513.00" font-size="8.2" font-weight="bold" fill="#cfcfd2" text-anchor="middle" textLength="34.04" lengthAdjust="spacingAndGlyphs" style="" filter="url(#ts)"  stroke="#cfcfd2" stroke-width="0.3">PREVIEW</text>
<rect x="304.60" y="448.40" width="7.5" height="7.5" fill="#1e1e21" opacity="0.7"/>
<rect x="304.00" y="447.20" width="7.5" height="7.5" fill="#d4eaf8"/>
<text x="342.30" y="453.90" font-size="8.2" font-weight="bold" fill="#cfcfd2" text-anchor="middle" textLength="48.18" lengthAdjust="spacingAndGlyphs" style="" filter="url(#ts)"  stroke="#cfcfd2" stroke-width="0.3">KEY FOLLOW</text>
<rect x="381.60" y="448.40" width="7.5" height="7.5" fill="#1e1e21" opacity="0.7"/>
<rect x="381.00" y="447.20" width="7.5" height="7.5" fill="#4f4f53"/>
<text x="408.90" y="453.90" font-size="8.2" font-weight="bold" fill="#cfcfd2" text-anchor="middle" textLength="27.38" lengthAdjust="spacingAndGlyphs" style="" filter="url(#ts)"  stroke="#cfcfd2" stroke-width="0.3">INVERT</text>
<rect x="436.90" y="448.40" width="7.5" height="7.5" fill="#1e1e21" opacity="0.7"/>
<rect x="436.30" y="447.20" width="7.5" height="7.5" fill="#4f4f53"/>
<text x="471.60" y="453.90" font-size="8.2" font-weight="bold" fill="#cfcfd2" text-anchor="middle" textLength="42.83" lengthAdjust="spacingAndGlyphs" style="" filter="url(#ts)"  stroke="#cfcfd2" stroke-width="0.3">RETRIGGER</text>
<rect x="502.00" y="446.20" width="73.60" height="10.30" fill="#080808" />
<text x="538.70" y="454.30" font-size="9.2" font-weight="bold" fill="#e2e2e2" text-anchor="middle" textLength="48.83" lengthAdjust="spacingAndGlyphs" style="" filter="url(#ts)" >Rand Phase</text>
<rect x="589" y="445.9" width="24.7" height="9.8" rx="3" fill="#48484c" filter="url(#ps)"/>
<text x="601.40" y="454.10" font-size="8.8" font-weight="bold" fill="#e4e4e4" text-anchor="middle" textLength="15.22" lengthAdjust="spacingAndGlyphs" style="" filter="url(#ts)"  stroke="#e4e4e4" stroke-width="0.3">COPY</text>
<rect x="298.6" y="503.6" width="321" height="12.6" rx="6.3" fill="#29292c"/>
<path d="M317.76,496.62 A13.60,13.60 0 1 1 335.24,496.62" fill="none" stroke="#55555b" stroke-width="3.3" stroke-linecap="butt"/>
<path d="M317.76,496.62 A13.60,13.60 0 0 1 328.86,472.81" fill="none" stroke="#5fd4a3" stroke-width="3.5" stroke-linecap="butt"/>
<circle cx="326.50" cy="486.80" r="11.70" fill="#1d1d21"/>
<circle cx="326.50" cy="486.20" r="10.80" fill="url(#kb)"/>
<line x1="327.03" y1="483.22" x2="328.15" y2="476.84" stroke="#efefef" stroke-width="2.16" stroke-linecap="butt"/>
<text x="326.45" y="513.00" font-size="8.2" font-weight="bold" fill="#cfcfd2" text-anchor="middle" textLength="30.68" lengthAdjust="spacingAndGlyphs" style="" filter="url(#ts)"  stroke="#cfcfd2" stroke-width="0.3">VOLUME</text>
<path d="M364.96,496.62 A13.60,13.60 0 1 1 382.44,496.62" fill="none" stroke="#55555b" stroke-width="3.3" stroke-linecap="butt"/>
<circle cx="373.70" cy="486.80" r="11.70" fill="#1d1d21"/>
<circle cx="373.70" cy="486.20" r="10.80" fill="url(#kb)"/>
<line x1="373.70" y1="483.18" x2="373.70" y2="476.70" stroke="#efefef" stroke-width="2.16" stroke-linecap="butt"/>
<text x="373.70" y="513.00" font-size="8.2" font-weight="bold" fill="#cfcfd2" text-anchor="middle" textLength="15.78" lengthAdjust="spacingAndGlyphs" style="" filter="url(#ts)"  stroke="#cfcfd2" stroke-width="0.3">PAN</text>
<circle cx="357.20" cy="471.00" r="2.8" fill="#7a7a7e"/>
<path d="M425.86,496.62 A13.60,13.60 0 1 1 443.34,496.62" fill="none" stroke="#55555b" stroke-width="3.3" stroke-linecap="butt"/>
<path d="M425.86,496.62 A13.60,13.60 0 0 1 423.46,494.00" fill="none" stroke="#5fd4a3" stroke-width="3.5" stroke-linecap="butt"/>
<circle cx="434.60" cy="486.80" r="11.70" fill="#1d1d21"/>
<circle cx="434.60" cy="486.20" r="10.80" fill="url(#kb)"/>
<line x1="431.98" y1="487.71" x2="426.37" y2="490.95" stroke="#efefef" stroke-width="2.16" stroke-linecap="butt"/>
<text x="434.20" y="513.00" font-size="8.2" font-weight="bold" fill="#cfcfd2" text-anchor="middle" textLength="30.41" lengthAdjust="spacingAndGlyphs" style="" filter="url(#ts)"  stroke="#cfcfd2" stroke-width="0.3">DETUNE</text>
<circle cx="418.10" cy="471.00" r="2.8" fill="#f4f4f4"/>
<path d="M472.76,496.62 A13.60,13.60 0 1 1 490.24,496.62" fill="none" stroke="#55555b" stroke-width="3.3" stroke-linecap="butt"/>
<path d="M481.50,472.60 A13.60,13.60 0 0 1 492.64,478.40" fill="none" stroke="#5fd4a3" stroke-width="3.5" stroke-linecap="butt"/>
<circle cx="481.50" cy="486.80" r="11.70" fill="#1d1d21"/>
<circle cx="481.50" cy="486.20" r="10.80" fill="url(#kb)"/>
<line x1="483.98" y1="484.47" x2="489.29" y2="480.75" stroke="#efefef" stroke-width="2.16" stroke-linecap="butt"/>
<text x="481.30" y="513.00" font-size="8.2" font-weight="bold" fill="#cfcfd2" text-anchor="middle" textLength="37.43" lengthAdjust="spacingAndGlyphs" style="" filter="url(#ts)"  stroke="#cfcfd2" stroke-width="0.3">SEMITONE</text>
<circle cx="465.00" cy="471.00" r="2.8" fill="#f4f4f4"/>
<path d="M533.96,496.62 A13.60,13.60 0 1 1 551.44,496.62" fill="none" stroke="#55555b" stroke-width="3.3" stroke-linecap="butt"/>
<path d="M533.96,496.62 A13.60,13.60 0 0 1 535.90,474.42" fill="none" stroke="#5fd4a3" stroke-width="3.5" stroke-linecap="butt"/>
<circle cx="542.70" cy="486.80" r="11.70" fill="#1d1d21"/>
<circle cx="542.70" cy="486.20" r="10.80" fill="url(#kb)"/>
<line x1="541.19" y1="483.58" x2="537.95" y2="477.97" stroke="#efefef" stroke-width="2.16" stroke-linecap="butt"/>
<text x="542.25" y="513.00" font-size="8.2" font-weight="bold" fill="#cfcfd2" text-anchor="middle" textLength="21.31" lengthAdjust="spacingAndGlyphs" style="" filter="url(#ts)"  stroke="#cfcfd2" stroke-width="0.3">WAVE</text>
<path d="M580.86,496.62 A13.60,13.60 0 1 1 598.34,496.62" fill="none" stroke="#55555b" stroke-width="3.3" stroke-linecap="butt"/>
<path d="M580.86,496.62 A13.60,13.60 0 1 1 601.38,479.40" fill="none" stroke="#5fd4a3" stroke-width="3.5" stroke-linecap="butt"/>
<circle cx="589.60" cy="486.80" r="11.70" fill="#1d1d21"/>
<circle cx="589.60" cy="486.20" r="10.80" fill="url(#kb)"/>
<line x1="592.22" y1="484.69" x2="597.83" y2="481.45" stroke="#efefef" stroke-width="2.16" stroke-linecap="butt"/>
<text x="589.45" y="513.00" font-size="8.2" font-weight="bold" fill="#cfcfd2" text-anchor="middle" textLength="27.12" lengthAdjust="spacingAndGlyphs" style="" filter="url(#ts)"  stroke="#cfcfd2" stroke-width="0.3">PARAM</text>
<path d="M528,465.7 h3.5 l-3.5,4.5 h3.5 M549.8,468.0 q1.6,-3.2 3.2,0 q1.6,3.2 3.2,0 M518,480.2 h3 v4.5 h3 M560.5,483.2 l1.4,-3 l1.4,3 l1.4,-3 l1.4,3 l1.4,-3 M520.5,496.7 q1.6,-3.2 3.2,0 q1.6,3.2 3.2,0 M558,497.2 h5.5 M560.75,494.45 v5.5" fill="none" stroke="#f0f0f0" stroke-width="1.3"/>
<text x="251.05" y="540.90" font-size="10" font-weight="bold" fill="#f2f2f2" text-anchor="middle" textLength="30.73" lengthAdjust="spacingAndGlyphs" style="" filter="url(#ts)"  stroke="#f2f2f2" stroke-width="0.3">OSC B2</text>
<rect x="212.5" y="549.5" width="77" height="37.5" fill="#111" filter="url(#ps)"/>
<rect x="213.5" y="549.1" width="75.4" height="36.5" fill="url(#prev)"/>
<path d="M213.5,567.7 L213.8,571.4 L216.3,573.3 L218.2,568.0 L221.9,568.0 L223.2,562.0 L243.3,570.2 L245.2,568.6 L254.7,573.0 L257.2,568.0 L260.3,568.0 L261.6,562.0 L286.7,571.4 L288.6,568.0 L288.6,568.6 L213.5,568.6 Z" fill="#5ad6a0" opacity="0.22"/>
<line x1="213.5" y1="568.6" x2="288.6" y2="568.6" stroke="#5fcf9f" stroke-width="0.8" opacity="0.6"/>
<path d="M213.5,567.7 L213.8,571.4 L216.3,573.3 L218.2,568.0 L221.9,568.0 L223.2,562.0 L243.3,570.2 L245.2,568.6 L254.7,573.0 L257.2,568.0 L260.3,568.0 L261.6,562.0 L286.7,571.4 L288.6,568.0" fill="none" stroke="#9af7cf" stroke-width="1.5" stroke-linejoin="round"/>
<text x="250.85" y="599.00" font-size="8.2" font-weight="bold" fill="#cfcfd2" text-anchor="middle" textLength="34.04" lengthAdjust="spacingAndGlyphs" style="" filter="url(#ts)"  stroke="#cfcfd2" stroke-width="0.3">PREVIEW</text>
<rect x="304.60" y="534.40" width="7.5" height="7.5" fill="#1e1e21" opacity="0.7"/>
<rect x="304.00" y="533.20" width="7.5" height="7.5" fill="#d4eaf8"/>
<text x="342.30" y="539.90" font-size="8.2" font-weight="bold" fill="#cfcfd2" text-anchor="middle" textLength="48.18" lengthAdjust="spacingAndGlyphs" style="" filter="url(#ts)"  stroke="#cfcfd2" stroke-width="0.3">KEY FOLLOW</text>
<rect x="381.60" y="534.40" width="7.5" height="7.5" fill="#1e1e21" opacity="0.7"/>
<rect x="381.00" y="533.20" width="7.5" height="7.5" fill="#d4eaf8"/>
<text x="408.90" y="539.90" font-size="8.2" font-weight="bold" fill="#cfcfd2" text-anchor="middle" textLength="27.38" lengthAdjust="spacingAndGlyphs" style="" filter="url(#ts)"  stroke="#cfcfd2" stroke-width="0.3">INVERT</text>
<rect x="436.90" y="534.40" width="7.5" height="7.5" fill="#1e1e21" opacity="0.7"/>
<rect x="436.30" y="533.20" width="7.5" height="7.5" fill="#4f4f53"/>
<text x="471.60" y="539.90" font-size="8.2" font-weight="bold" fill="#cfcfd2" text-anchor="middle" textLength="42.83" lengthAdjust="spacingAndGlyphs" style="" filter="url(#ts)"  stroke="#cfcfd2" stroke-width="0.3">RETRIGGER</text>
<rect x="502.00" y="532.20" width="73.60" height="10.30" fill="#080808" />
<text x="538.70" y="540.30" font-size="9.2" font-weight="bold" fill="#e2e2e2" text-anchor="middle" textLength="48.83" lengthAdjust="spacingAndGlyphs" style="" filter="url(#ts)" >Rand Phase</text>
<rect x="589" y="531.9" width="24.7" height="9.8" rx="3" fill="#48484c" filter="url(#ps)"/>
<text x="601.40" y="540.10" font-size="8.8" font-weight="bold" fill="#e4e4e4" text-anchor="middle" textLength="15.22" lengthAdjust="spacingAndGlyphs" style="" filter="url(#ts)"  stroke="#e4e4e4" stroke-width="0.3">COPY</text>
<rect x="298.6" y="589.6" width="321" height="12.6" rx="6.3" fill="#29292c"/>
<path d="M317.76,582.62 A13.60,13.60 0 1 1 335.24,582.62" fill="none" stroke="#55555b" stroke-width="3.3" stroke-linecap="butt"/>
<path d="M317.76,582.62 A13.60,13.60 0 1 1 339.28,567.55" fill="none" stroke="#5fd4a3" stroke-width="3.5" stroke-linecap="butt"/>
<circle cx="326.50" cy="572.80" r="11.70" fill="#1d1d21"/>
<circle cx="326.50" cy="572.20" r="10.80" fill="url(#kb)"/>
<line x1="329.34" y1="571.17" x2="335.43" y2="568.95" stroke="#efefef" stroke-width="2.16" stroke-linecap="butt"/>
<text x="326.45" y="599.00" font-size="8.2" font-weight="bold" fill="#cfcfd2" text-anchor="middle" textLength="30.68" lengthAdjust="spacingAndGlyphs" style="" filter="url(#ts)"  stroke="#cfcfd2" stroke-width="0.3">VOLUME</text>
<path d="M364.96,582.62 A13.60,13.60 0 1 1 382.44,582.62" fill="none" stroke="#55555b" stroke-width="3.3" stroke-linecap="butt"/>
<circle cx="373.70" cy="572.80" r="11.70" fill="#1d1d21"/>
<circle cx="373.70" cy="572.20" r="10.80" fill="url(#kb)"/>
<line x1="373.70" y1="569.18" x2="373.70" y2="562.70" stroke="#efefef" stroke-width="2.16" stroke-linecap="butt"/>
<text x="373.70" y="599.00" font-size="8.2" font-weight="bold" fill="#cfcfd2" text-anchor="middle" textLength="15.78" lengthAdjust="spacingAndGlyphs" style="" filter="url(#ts)"  stroke="#cfcfd2" stroke-width="0.3">PAN</text>
<circle cx="357.20" cy="557.00" r="2.8" fill="#7a7a7e"/>
<path d="M425.86,582.62 A13.60,13.60 0 1 1 443.34,582.62" fill="none" stroke="#55555b" stroke-width="3.3" stroke-linecap="butt"/>
<path d="M425.86,582.62 A13.60,13.60 0 1 1 447.74,575.72" fill="none" stroke="#5fd4a3" stroke-width="3.5" stroke-linecap="butt"/>
<circle cx="434.60" cy="572.80" r="11.70" fill="#1d1d21"/>
<circle cx="434.60" cy="572.20" r="10.80" fill="url(#kb)"/>
<line x1="437.52" y1="572.98" x2="443.78" y2="574.66" stroke="#efefef" stroke-width="2.16" stroke-linecap="butt"/>
<text x="434.20" y="599.00" font-size="8.2" font-weight="bold" fill="#cfcfd2" text-anchor="middle" textLength="30.41" lengthAdjust="spacingAndGlyphs" style="" filter="url(#ts)"  stroke="#cfcfd2" stroke-width="0.3">DETUNE</text>
<circle cx="418.10" cy="557.00" r="2.8" fill="#f4f4f4"/>
<path d="M472.76,582.62 A13.60,13.60 0 1 1 490.24,582.62" fill="none" stroke="#55555b" stroke-width="3.3" stroke-linecap="butt"/>
<path d="M481.50,558.60 A13.60,13.60 0 0 1 492.64,564.40" fill="none" stroke="#5fd4a3" stroke-width="3.5" stroke-linecap="butt"/>
<circle cx="481.50" cy="572.80" r="11.70" fill="#1d1d21"/>
<circle cx="481.50" cy="572.20" r="10.80" fill="url(#kb)"/>
<line x1="483.98" y1="570.47" x2="489.29" y2="566.75" stroke="#efefef" stroke-width="2.16" stroke-linecap="butt"/>
<text x="481.30" y="599.00" font-size="8.2" font-weight="bold" fill="#cfcfd2" text-anchor="middle" textLength="37.43" lengthAdjust="spacingAndGlyphs" style="" filter="url(#ts)"  stroke="#cfcfd2" stroke-width="0.3">SEMITONE</text>
<circle cx="465.00" cy="557.00" r="2.8" fill="#f4f4f4"/>
<path d="M533.96,582.62 A13.60,13.60 0 1 1 551.44,582.62" fill="none" stroke="#55555b" stroke-width="3.3" stroke-linecap="butt"/>
<path d="M533.96,582.62 A13.60,13.60 0 0 1 535.90,560.42" fill="none" stroke="#5fd4a3" stroke-width="3.5" stroke-linecap="butt"/>
<circle cx="542.70" cy="572.80" r="11.70" fill="#1d1d21"/>
<circle cx="542.70" cy="572.20" r="10.80" fill="url(#kb)"/>
<line x1="541.19" y1="569.58" x2="537.95" y2="563.97" stroke="#efefef" stroke-width="2.16" stroke-linecap="butt"/>
<text x="542.25" y="599.00" font-size="8.2" font-weight="bold" fill="#cfcfd2" text-anchor="middle" textLength="21.31" lengthAdjust="spacingAndGlyphs" style="" filter="url(#ts)"  stroke="#cfcfd2" stroke-width="0.3">WAVE</text>
<path d="M580.86,582.62 A13.60,13.60 0 1 1 598.34,582.62" fill="none" stroke="#55555b" stroke-width="3.3" stroke-linecap="butt"/>
<circle cx="589.60" cy="572.80" r="11.70" fill="#1d1d21"/>
<circle cx="589.60" cy="572.20" r="10.80" fill="url(#kb)"/>
<line x1="587.28" y1="574.14" x2="582.32" y2="578.31" stroke="#efefef" stroke-width="2.16" stroke-linecap="butt"/>
<text x="589.45" y="599.00" font-size="8.2" font-weight="bold" fill="#cfcfd2" text-anchor="middle" textLength="27.12" lengthAdjust="spacingAndGlyphs" style="" filter="url(#ts)"  stroke="#cfcfd2" stroke-width="0.3">PARAM</text>
<path d="M528,551.7 h3.5 l-3.5,4.5 h3.5 M549.8,554.0 q1.6,-3.2 3.2,0 q1.6,3.2 3.2,0 M518,566.2 h3 v4.5 h3 M560.5,569.2 l1.4,-3 l1.4,3 l1.4,-3 l1.4,3 l1.4,-3 M520.5,582.7 q1.6,-3.2 3.2,0 q1.6,3.2 3.2,0 M558,583.2 h5.5 M560.75,580.45 v5.5" fill="none" stroke="#f0f0f0" stroke-width="1.3"/>
<rect x="646" y="123.4" width="421.5999999999999" height="123.6" fill="#2f2f33" filter="url(#ps)"/>
<rect x="646" y="247.00" width="421.5999999999999" height="1" fill="#8ad6b8" opacity="0.75"/>
<rect x="646" y="123.4" width="175" height="24.6" fill="url(#fhdr)"/>
<rect x="821" y="123.4" width="246.6" height="24" fill="url(#ahdr)"/>
<line x1="820.5" y1="123.4" x2="820.5" y2="247" stroke="#262629" stroke-width="1"/>
<line x1="821.5" y1="147.5" x2="821.5" y2="247" stroke="#39393d" stroke-width="1"/>
<text x="677.00" y="137.90" font-size="9.6" font-weight="bold" fill="#f2f2f2" text-anchor="middle" textLength="39.18" lengthAdjust="spacingAndGlyphs" style="" filter="url(#ts)"  stroke="#f2f2f2" stroke-width="0.3">FILTER A</text>
<path d="M667.87,181.88 A14.20,14.20 0 1 1 686.13,181.88" fill="none" stroke="#55555b" stroke-width="3" stroke-linecap="butt"/>
<path d="M667.87,181.88 A14.20,14.20 0 1 1 686.13,181.88" fill="none" stroke="#5fd4a3" stroke-width="3.2" stroke-linecap="butt"/>
<circle cx="677.00" cy="171.60" r="11.90" fill="#1d1d21"/>
<circle cx="677.00" cy="171.00" r="11.00" fill="url(#kb)"/>
<line x1="678.98" y1="173.36" x2="683.22" y2="178.42" stroke="#efefef" stroke-width="2.20" stroke-linecap="butt"/>
<text x="676.10" y="197.00" font-size="8.2" font-weight="bold" fill="#cfcfd2" text-anchor="middle" textLength="28.97" lengthAdjust="spacingAndGlyphs" style="" filter="url(#ts)"  stroke="#cfcfd2" stroke-width="0.3">CUTOFF</text>
<rect x="704" y="154" width="107" height="40" fill="#39393d" filter="url(#ps)"/>
<text x="733.20" y="164.00" font-size="8.2" font-weight="normal" fill="#d4d4d6" text-anchor="middle" textLength="47.59" lengthAdjust="spacingAndGlyphs" style="" filter="url(#ts)" stroke="#d4d4d6" stroke-width="0.35">Filter mode:</text>
<text x="789.30" y="164.00" font-size="8.2" font-weight="normal" fill="#d4d4d6" text-anchor="middle" textLength="33.78" lengthAdjust="spacingAndGlyphs" style="" filter="url(#ts)" stroke="#d4d4d6" stroke-width="0.35">LP 12dB</text>
<text x="730.60" y="177.40" font-size="8.2" font-weight="normal" fill="#d4d4d6" text-anchor="middle" textLength="39.98" lengthAdjust="spacingAndGlyphs" style="" filter="url(#ts)" stroke="#d4d4d6" stroke-width="0.35">Sat mode:</text>
<text x="800.50" y="177.40" font-size="8.2" font-weight="normal" fill="#d4d4d6" text-anchor="middle" textLength="11.36" lengthAdjust="spacingAndGlyphs" style="" filter="url(#ts)" stroke="#d4d4d6" stroke-width="0.35">Off</text>
<text x="725.50" y="191.00" font-size="8.2" font-weight="normal" fill="#d4d4d6" text-anchor="middle" textLength="29.77" lengthAdjust="spacingAndGlyphs" style="" filter="url(#ts)" stroke="#d4d4d6" stroke-width="0.35">Source:</text>
<text x="791.10" y="191.00" font-size="8.2" font-weight="normal" fill="#d4d4d6" text-anchor="middle" textLength="30.17" lengthAdjust="spacingAndGlyphs" style="" filter="url(#ts)" stroke="#d4d4d6" stroke-width="0.35">All Osc</text>
<path d="M694.70,223.51 A9.80,9.80 0 1 1 707.30,223.51" fill="none" stroke="#55555b" stroke-width="2.6" stroke-linecap="butt"/>
<circle cx="701.00" cy="216.60" r="8.60" fill="#1d1d21"/>
<circle cx="701.00" cy="216.00" r="7.70" fill="url(#kb)"/>
<line x1="699.48" y1="217.52" x2="696.21" y2="220.79" stroke="#efefef" stroke-width="1.60" stroke-linecap="butt"/>
<circle cx="736.00" cy="216.60" r="9.10" fill="#1d1d21"/>
<circle cx="736.00" cy="216.00" r="8.20" fill="url(#kbd)"/>
<path d="M765.30,223.51 A9.80,9.80 0 1 1 777.90,223.51" fill="none" stroke="#55555b" stroke-width="2.6" stroke-linecap="butt"/>
<circle cx="771.60" cy="216.60" r="8.60" fill="#1d1d21"/>
<circle cx="771.60" cy="216.00" r="7.70" fill="url(#kb)"/>
<line x1="770.08" y1="217.52" x2="766.81" y2="220.79" stroke="#efefef" stroke-width="1.60" stroke-linecap="butt"/>
<text x="701.70" y="236.00" font-size="8.2" font-weight="bold" fill="#cfcfd2" text-anchor="middle" textLength="14.57" lengthAdjust="spacingAndGlyphs" style="" filter="url(#ts)"  stroke="#cfcfd2" stroke-width="0.3">RES</text>
<text x="736.80" y="236.00" font-size="8.2" font-weight="bold" fill="#cfcfd2" text-anchor="middle" textLength="22.37" lengthAdjust="spacingAndGlyphs" style="" filter="url(#ts)"  stroke="#cfcfd2" stroke-width="0.3">DRIVE</text>
<text x="772.00" y="236.00" font-size="8.2" font-weight="bold" fill="#cfcfd2" text-anchor="middle" textLength="30.01" lengthAdjust="spacingAndGlyphs" style="" filter="url(#ts)"  stroke="#cfcfd2" stroke-width="0.3">KEYTRK</text>
<text x="851.00" y="137.90" font-size="9.6" font-weight="bold" fill="#f2f2f2" text-anchor="middle" textLength="27.97" lengthAdjust="spacingAndGlyphs" style="" filter="url(#ts)"  stroke="#f2f2f2" stroke-width="0.3">AMP A</text>
<rect x="982.20" y="133.40" width="7.6" height="7.6" fill="#1e1e21" opacity="0.7"/>
<rect x="981.60" y="132.20" width="7.6" height="7.6" fill="#d4eaf8"/>
<text x="1008.60" y="139.20" font-size="8.2" font-weight="bold" fill="#cfcfd2" text-anchor="middle" textLength="30.01" lengthAdjust="spacingAndGlyphs" style="" filter="url(#ts)"  stroke="#cfcfd2" stroke-width="0.3">ENABLE</text>
<rect x="1032.4" y="131" width="24.2" height="9.4" rx="3" fill="#48484c" filter="url(#ps)"/>
<text x="1044.50" y="139.10" font-size="8.8" font-weight="bold" fill="#e4e4e4" text-anchor="middle" textLength="16.02" lengthAdjust="spacingAndGlyphs" style="" filter="url(#ts)"  stroke="#e4e4e4" stroke-width="0.3">COPY</text>
<rect x="849.00" y="159.00" width="4.00" height="59.60" fill="#5c5c61" />
<rect x="843" y="213" width="16" height="9" fill="url(#sl)" stroke="#3a3a3e" stroke-width="0.6" filter="url(#ps)"/>
<rect x="869.00" y="159.00" width="4.00" height="59.60" fill="#5c5c61" />
<rect x="863" y="213" width="16" height="9" fill="url(#sl)" stroke="#3a3a3e" stroke-width="0.6" filter="url(#ps)"/>
<rect x="889.00" y="159.00" width="4.00" height="59.60" fill="#5c5c61" />
<rect x="883" y="213" width="16" height="9" fill="url(#sl)" stroke="#3a3a3e" stroke-width="0.6" filter="url(#ps)"/>
<rect x="909.40" y="159.00" width="4.00" height="59.60" fill="#5c5c61" />
<rect x="909.40" y="162.40" width="4.00" height="56.20" fill="#5bd5a5" />
<rect x="903.4" y="154.4" width="16" height="9" fill="url(#sl)" stroke="#3a3a3e" stroke-width="0.6" filter="url(#ps)"/>
<rect x="929.40" y="159.00" width="4.00" height="59.60" fill="#5c5c61" />
<rect x="929.40" y="212.40" width="4.00" height="6.20" fill="#5bd5a5" />
<rect x="923.4" y="204.4" width="16" height="9" fill="url(#sl)" stroke="#3a3a3e" stroke-width="0.6" filter="url(#ps)"/>
<text x="849.60" y="234.00" font-size="8.2" font-weight="bold" fill="#cfcfd2" text-anchor="middle" textLength="14.00" lengthAdjust="spacingAndGlyphs" style="" filter="url(#ts)"  stroke="#cfcfd2" stroke-width="0.3">ATT</text>
<text x="870.50" y="234.00" font-size="8.2" font-weight="bold" fill="#cfcfd2" text-anchor="middle" textLength="19.82" lengthAdjust="spacingAndGlyphs" style="" filter="url(#ts)"  stroke="#cfcfd2" stroke-width="0.3">HOLD</text>
<text x="891.30" y="234.00" font-size="8.2" font-weight="bold" fill="#cfcfd2" text-anchor="middle" textLength="15.41" lengthAdjust="spacingAndGlyphs" style="" filter="url(#ts)"  stroke="#cfcfd2" stroke-width="0.3">DEC</text>
<text x="912.30" y="234.00" font-size="8.2" font-weight="bold" fill="#cfcfd2" text-anchor="middle" textLength="14.57" lengthAdjust="spacingAndGlyphs" style="" filter="url(#ts)"  stroke="#cfcfd2" stroke-width="0.3">SUS</text>
<text x="931.20" y="234.00" font-size="8.2" font-weight="bold" fill="#cfcfd2" text-anchor="middle" textLength="14.40" lengthAdjust="spacingAndGlyphs" style="" filter="url(#ts)"  stroke="#cfcfd2" stroke-width="0.3">REL</text>
<path d="M962.70,181.51 A9.80,9.80 0 1 1 975.30,181.51" fill="none" stroke="#55555b" stroke-width="2.6" stroke-linecap="butt"/>
<circle cx="969.00" cy="174.60" r="8.60" fill="#1d1d21"/>
<circle cx="969.00" cy="174.00" r="7.70" fill="url(#kb)"/>
<line x1="969.00" y1="171.84" x2="969.00" y2="167.22" stroke="#efefef" stroke-width="1.60" stroke-linecap="butt"/>
<text x="969.80" y="194.00" font-size="8.2" font-weight="bold" fill="#cfcfd2" text-anchor="middle" textLength="32.42" lengthAdjust="spacingAndGlyphs" style="" filter="url(#ts)"  stroke="#cfcfd2" stroke-width="0.3">A SLOPE</text>
<path d="M962.70,218.91 A9.80,9.80 0 1 1 975.30,218.91" fill="none" stroke="#55555b" stroke-width="2.6" stroke-linecap="butt"/>
<path d="M959.20,211.40 A9.80,9.80 0 0 1 969.00,201.60" fill="none" stroke="#5fd4a3" stroke-width="2.8000000000000003" stroke-linecap="butt"/>
<circle cx="969.00" cy="212.00" r="8.60" fill="#1d1d21"/>
<circle cx="969.00" cy="211.40" r="7.70" fill="url(#kb)"/>
<line x1="966.84" y1="211.40" x2="962.22" y2="211.40" stroke="#efefef" stroke-width="1.60" stroke-linecap="butt"/>
<text x="969.80" y="231.00" font-size="8.2" font-weight="bold" fill="#cfcfd2" text-anchor="middle" textLength="32.40" lengthAdjust="spacingAndGlyphs" style="" filter="url(#ts)"  stroke="#cfcfd2" stroke-width="0.3">D SLOPE</text>
<rect x="996.5" y="151.2" width="57.6" height="30.6" fill="url(#prev)" filter="url(#ps)"/>
<text x="1026.30" y="194.00" font-size="8.2" font-weight="bold" fill="#cfcfd2" text-anchor="middle" textLength="34.54" lengthAdjust="spacingAndGlyphs" style="" filter="url(#ts)"  stroke="#cfcfd2" stroke-width="0.3">PREVIEW</text>
<path d="M1019.70,223.51 A9.80,9.80 0 1 1 1032.30,223.51" fill="none" stroke="#55555b" stroke-width="2.6" stroke-linecap="butt"/>
<circle cx="1026.00" cy="216.60" r="8.60" fill="#1d1d21"/>
<circle cx="1026.00" cy="216.00" r="7.70" fill="url(#kb)"/>
<line x1="1026.00" y1="213.84" x2="1026.00" y2="209.22" stroke="#efefef" stroke-width="1.60" stroke-linecap="butt"/>
<text x="1026.30" y="236.00" font-size="8.2" font-weight="bold" fill="#cfcfd2" text-anchor="middle" textLength="18.60" lengthAdjust="spacingAndGlyphs" style="" filter="url(#ts)"  stroke="#cfcfd2" stroke-width="0.3">GAIN</text>
<rect x="646" y="256.4" width="421.5999999999999" height="123.60000000000002" fill="#2f2f33" filter="url(#ps)"/>
<rect x="646" y="380.00" width="421.5999999999999" height="1" fill="#8ad6b8" opacity="0.75"/>
<rect x="646" y="256.4" width="175" height="24.6" fill="url(#fhdr)"/>
<rect x="821" y="256.4" width="246.6" height="24" fill="url(#ahdr)"/>
<line x1="820.5" y1="256.4" x2="820.5" y2="380" stroke="#262629" stroke-width="1"/>
<line x1="821.5" y1="280.5" x2="821.5" y2="380" stroke="#39393d" stroke-width="1"/>
<text x="677.00" y="270.90" font-size="9.6" font-weight="bold" fill="#f2f2f2" text-anchor="middle" textLength="39.16" lengthAdjust="spacingAndGlyphs" style="" filter="url(#ts)"  stroke="#f2f2f2" stroke-width="0.3">FILTER B</text>
<path d="M667.87,314.88 A14.20,14.20 0 1 1 686.13,314.88" fill="none" stroke="#55555b" stroke-width="3" stroke-linecap="butt"/>
<path d="M667.87,314.88 A14.20,14.20 0 1 1 686.13,314.88" fill="none" stroke="#5fd4a3" stroke-width="3.2" stroke-linecap="butt"/>
<circle cx="677.00" cy="304.60" r="11.90" fill="#1d1d21"/>
<circle cx="677.00" cy="304.00" r="11.00" fill="url(#kb)"/>
<line x1="678.98" y1="306.36" x2="683.22" y2="311.42" stroke="#efefef" stroke-width="2.20" stroke-linecap="butt"/>
<text x="676.10" y="330.00" font-size="8.2" font-weight="bold" fill="#cfcfd2" text-anchor="middle" textLength="28.97" lengthAdjust="spacingAndGlyphs" style="" filter="url(#ts)"  stroke="#cfcfd2" stroke-width="0.3">CUTOFF</text>
<rect x="704" y="287" width="107" height="40" fill="#39393d" filter="url(#ps)"/>
<text x="733.20" y="297.00" font-size="8.2" font-weight="normal" fill="#d4d4d6" text-anchor="middle" textLength="47.59" lengthAdjust="spacingAndGlyphs" style="" filter="url(#ts)" stroke="#d4d4d6" stroke-width="0.35">Filter mode:</text>
<text x="789.30" y="297.00" font-size="8.2" font-weight="normal" fill="#d4d4d6" text-anchor="middle" textLength="33.78" lengthAdjust="spacingAndGlyphs" style="" filter="url(#ts)" stroke="#d4d4d6" stroke-width="0.35">LP 12dB</text>
<text x="730.60" y="310.40" font-size="8.2" font-weight="normal" fill="#d4d4d6" text-anchor="middle" textLength="39.98" lengthAdjust="spacingAndGlyphs" style="" filter="url(#ts)" stroke="#d4d4d6" stroke-width="0.35">Sat mode:</text>
<text x="800.50" y="310.40" font-size="8.2" font-weight="normal" fill="#d4d4d6" text-anchor="middle" textLength="11.36" lengthAdjust="spacingAndGlyphs" style="" filter="url(#ts)" stroke="#d4d4d6" stroke-width="0.35">Off</text>
<text x="725.50" y="324.00" font-size="8.2" font-weight="normal" fill="#d4d4d6" text-anchor="middle" textLength="29.77" lengthAdjust="spacingAndGlyphs" style="" filter="url(#ts)" stroke="#d4d4d6" stroke-width="0.35">Source:</text>
<text x="793.60" y="324.00" font-size="8.2" font-weight="normal" fill="#d4d4d6" text-anchor="middle" textLength="25.22" lengthAdjust="spacingAndGlyphs" style="" filter="url(#ts)" stroke="#d4d4d6" stroke-width="0.35">Osc B</text>
<path d="M694.70,356.51 A9.80,9.80 0 1 1 707.30,356.51" fill="none" stroke="#55555b" stroke-width="2.6" stroke-linecap="butt"/>
<circle cx="701.00" cy="349.60" r="8.60" fill="#1d1d21"/>
<circle cx="701.00" cy="349.00" r="7.70" fill="url(#kb)"/>
<line x1="699.48" y1="350.52" x2="696.21" y2="353.79" stroke="#efefef" stroke-width="1.60" stroke-linecap="butt"/>
<circle cx="736.00" cy="349.60" r="9.10" fill="#1d1d21"/>
<circle cx="736.00" cy="349.00" r="8.20" fill="url(#kbd)"/>
<path d="M765.30,356.51 A9.80,9.80 0 1 1 777.90,356.51" fill="none" stroke="#55555b" stroke-width="2.6" stroke-linecap="butt"/>
<circle cx="771.60" cy="349.60" r="8.60" fill="#1d1d21"/>
<circle cx="771.60" cy="349.00" r="7.70" fill="url(#kb)"/>
<line x1="770.08" y1="350.52" x2="766.81" y2="353.79" stroke="#efefef" stroke-width="1.60" stroke-linecap="butt"/>
<text x="701.70" y="369.00" font-size="8.2" font-weight="bold" fill="#cfcfd2" text-anchor="middle" textLength="14.57" lengthAdjust="spacingAndGlyphs" style="" filter="url(#ts)"  stroke="#cfcfd2" stroke-width="0.3">RES</text>
<text x="736.80" y="369.00" font-size="8.2" font-weight="bold" fill="#cfcfd2" text-anchor="middle" textLength="22.37" lengthAdjust="spacingAndGlyphs" style="" filter="url(#ts)"  stroke="#cfcfd2" stroke-width="0.3">DRIVE</text>
<text x="772.00" y="369.00" font-size="8.2" font-weight="bold" fill="#cfcfd2" text-anchor="middle" textLength="30.01" lengthAdjust="spacingAndGlyphs" style="" filter="url(#ts)"  stroke="#cfcfd2" stroke-width="0.3">KEYTRK</text>
<text x="851.00" y="270.90" font-size="9.6" font-weight="bold" fill="#f2f2f2" text-anchor="middle" textLength="28.04" lengthAdjust="spacingAndGlyphs" style="" filter="url(#ts)"  stroke="#f2f2f2" stroke-width="0.3">AMP B</text>
<rect x="982.20" y="266.40" width="7.6" height="7.6" fill="#1e1e21" opacity="0.7"/>
<rect x="981.60" y="265.20" width="7.6" height="7.6" fill="#d4eaf8"/>
<text x="1008.60" y="272.20" font-size="8.2" font-weight="bold" fill="#cfcfd2" text-anchor="middle" textLength="30.01" lengthAdjust="spacingAndGlyphs" style="" filter="url(#ts)"  stroke="#cfcfd2" stroke-width="0.3">ENABLE</text>
<rect x="1032.4" y="264" width="24.2" height="9.4" rx="3" fill="#48484c" filter="url(#ps)"/>
<text x="1044.50" y="272.10" font-size="8.8" font-weight="bold" fill="#e4e4e4" text-anchor="middle" textLength="16.02" lengthAdjust="spacingAndGlyphs" style="" filter="url(#ts)"  stroke="#e4e4e4" stroke-width="0.3">COPY</text>
<rect x="849.00" y="292.00" width="4.00" height="59.60" fill="#5c5c61" />
<rect x="843" y="346" width="16" height="9" fill="url(#sl)" stroke="#3a3a3e" stroke-width="0.6" filter="url(#ps)"/>
<rect x="869.00" y="292.00" width="4.00" height="59.60" fill="#5c5c61" />
<rect x="863" y="346" width="16" height="9" fill="url(#sl)" stroke="#3a3a3e" stroke-width="0.6" filter="url(#ps)"/>
<rect x="889.00" y="292.00" width="4.00" height="59.60" fill="#5c5c61" />
<rect x="883" y="346" width="16" height="9" fill="url(#sl)" stroke="#3a3a3e" stroke-width="0.6" filter="url(#ps)"/>
<rect x="909.40" y="292.00" width="4.00" height="59.60" fill="#5c5c61" />
<rect x="909.40" y="295.40" width="4.00" height="56.20" fill="#5bd5a5" />
<rect x="903.4" y="287.4" width="16" height="9" fill="url(#sl)" stroke="#3a3a3e" stroke-width="0.6" filter="url(#ps)"/>
<rect x="929.40" y="292.00" width="4.00" height="59.60" fill="#5c5c61" />
<rect x="923.4" y="346" width="16" height="9" fill="url(#sl)" stroke="#3a3a3e" stroke-width="0.6" filter="url(#ps)"/>
<text x="849.60" y="367.00" font-size="8.2" font-weight="bold" fill="#cfcfd2" text-anchor="middle" textLength="14.00" lengthAdjust="spacingAndGlyphs" style="" filter="url(#ts)"  stroke="#cfcfd2" stroke-width="0.3">ATT</text>
<text x="870.50" y="367.00" font-size="8.2" font-weight="bold" fill="#cfcfd2" text-anchor="middle" textLength="19.82" lengthAdjust="spacingAndGlyphs" style="" filter="url(#ts)"  stroke="#cfcfd2" stroke-width="0.3">HOLD</text>
<text x="891.30" y="367.00" font-size="8.2" font-weight="bold" fill="#cfcfd2" text-anchor="middle" textLength="15.41" lengthAdjust="spacingAndGlyphs" style="" filter="url(#ts)"  stroke="#cfcfd2" stroke-width="0.3">DEC</text>
<text x="912.30" y="367.00" font-size="8.2" font-weight="bold" fill="#cfcfd2" text-anchor="middle" textLength="14.57" lengthAdjust="spacingAndGlyphs" style="" filter="url(#ts)"  stroke="#cfcfd2" stroke-width="0.3">SUS</text>
<text x="931.20" y="367.00" font-size="8.2" font-weight="bold" fill="#cfcfd2" text-anchor="middle" textLength="14.40" lengthAdjust="spacingAndGlyphs" style="" filter="url(#ts)"  stroke="#cfcfd2" stroke-width="0.3">REL</text>
<path d="M962.70,314.51 A9.80,9.80 0 1 1 975.30,314.51" fill="none" stroke="#55555b" stroke-width="2.6" stroke-linecap="butt"/>
<circle cx="969.00" cy="307.60" r="8.60" fill="#1d1d21"/>
<circle cx="969.00" cy="307.00" r="7.70" fill="url(#kb)"/>
<line x1="969.00" y1="304.84" x2="969.00" y2="300.22" stroke="#efefef" stroke-width="1.60" stroke-linecap="butt"/>
<text x="969.80" y="327.00" font-size="8.2" font-weight="bold" fill="#cfcfd2" text-anchor="middle" textLength="32.42" lengthAdjust="spacingAndGlyphs" style="" filter="url(#ts)"  stroke="#cfcfd2" stroke-width="0.3">A SLOPE</text>
<path d="M962.70,351.91 A9.80,9.80 0 1 1 975.30,351.91" fill="none" stroke="#55555b" stroke-width="2.6" stroke-linecap="butt"/>
<path d="M959.20,344.40 A9.80,9.80 0 0 1 969.00,334.60" fill="none" stroke="#5fd4a3" stroke-width="2.8000000000000003" stroke-linecap="butt"/>
<circle cx="969.00" cy="345.00" r="8.60" fill="#1d1d21"/>
<circle cx="969.00" cy="344.40" r="7.70" fill="url(#kb)"/>
<line x1="966.84" y1="344.40" x2="962.22" y2="344.40" stroke="#efefef" stroke-width="1.60" stroke-linecap="butt"/>
<text x="969.80" y="364.00" font-size="8.2" font-weight="bold" fill="#cfcfd2" text-anchor="middle" textLength="32.40" lengthAdjust="spacingAndGlyphs" style="" filter="url(#ts)"  stroke="#cfcfd2" stroke-width="0.3">D SLOPE</text>
<rect x="996.5" y="284.2" width="57.6" height="30.6" fill="url(#prev)" filter="url(#ps)"/>
<text x="1026.30" y="327.00" font-size="8.2" font-weight="bold" fill="#cfcfd2" text-anchor="middle" textLength="34.54" lengthAdjust="spacingAndGlyphs" style="" filter="url(#ts)"  stroke="#cfcfd2" stroke-width="0.3">PREVIEW</text>
<path d="M1019.70,356.51 A9.80,9.80 0 1 1 1032.30,356.51" fill="none" stroke="#55555b" stroke-width="2.6" stroke-linecap="butt"/>
<circle cx="1026.00" cy="349.60" r="8.60" fill="#1d1d21"/>
<circle cx="1026.00" cy="349.00" r="7.70" fill="url(#kb)"/>
<line x1="1026.00" y1="346.84" x2="1026.00" y2="342.22" stroke="#efefef" stroke-width="1.60" stroke-linecap="butt"/>
<text x="1026.30" y="369.00" font-size="8.2" font-weight="bold" fill="#cfcfd2" text-anchor="middle" textLength="18.60" lengthAdjust="spacingAndGlyphs" style="" filter="url(#ts)"  stroke="#cfcfd2" stroke-width="0.3">GAIN</text>
<path d="M997.1,166.0 L998.2,164.7 L999.3,163.7 L1000.4,162.6 L1001.3,162.2 L1002.3,162.7 L1003.2,160.7 L1004.3,160.3 L1005.4,160.1 L1006.5,159.8 L1007.6,159.7 L1008.8,158.0 L1009.9,158.6 L1011.0,158.2 L1012.7,157.3 L1014.0,157.6 L1015.0,159.4 L1016.0,160.4 L1016.6,163.2 L1017.5,164.7 L1018.5,163.0 L1019.5,164.2 L1020.5,165.4 L1021.6,166.5 L1022.5,164.5 L1023.5,166.1 L1024.5,165.1 L1025.5,163.7 L1026.6,161.4 L1027.7,162.1 L1028.8,162.8 L1029.9,160.4 L1031.0,163.0 L1032.2,162.6 L1033.3,162.8 L1034.4,162.4 L1035.5,160.7 L1036.6,161.5 L1037.7,159.7 L1038.8,161.0 L1040.0,159.3 L1041.1,160.4 L1042.2,159.3 L1043.3,159.3 L1044.4,158.5 L1045.5,159.8 L1046.6,159.7 L1047.8,159.6 L1048.9,160.9 L1050.0,159.8 L1051.1,160.7 L1052.2,161.5 L1053.3,163.2" fill="none" stroke="#9af7cf" stroke-width="1.25" stroke-linejoin="round"/>
<path d="M997.1,174.9 L998.2,172.6 L999.1,172.5 L1000.0,171.5 L1001.0,171.0 L1002.1,171.2 L1003.2,170.4 L1004.1,168.4 L1005.0,166.0 L1006.0,164.8 L1007.1,166.0 L1008.2,165.6 L1009.3,164.7 L1010.4,163.2 L1011.3,163.7 L1012.2,167.5 L1013.2,169.9 L1014.3,171.2 L1015.4,173.8 L1016.6,174.9 L1017.7,170.4 L1018.8,172.1 L1019.9,175.4 L1021.0,174.8 L1022.1,174.1 L1023.2,175.4 L1024.4,174.6 L1025.5,172.1 L1026.4,171.3 L1027.3,172.3 L1028.3,170.3 L1029.2,171.7 L1030.1,170.9 L1031.0,169.3 L1032.2,166.3 L1033.3,166.5 L1034.4,166.1 L1035.5,168.9 L1036.6,168.1 L1037.7,168.7 L1038.7,170.7 L1039.6,169.2 L1040.5,169.9 L1041.5,167.7 L1042.5,168.6 L1043.4,168.2 L1044.4,166.5 L1045.5,165.5 L1046.6,164.6 L1047.8,165.1 L1048.9,165.4 L1050.0,167.0 L1051.1,166.5 L1052.2,164.6 L1053.3,166.0" fill="none" stroke="#9af7cf" stroke-width="1.25" stroke-linejoin="round"/>
<path d="M997.0,299.2 L998.0,299.2 L998.5,296.2 L1003.5,296.2 L1003.5,295.7 L1010.5,295.7 L1011.0,300.7 L1029.5,300.7 L1030.0,296.2 L1039.5,296.2 L1040.0,300.7 L1053.5,300.7" fill="none" stroke="#9af7cf" stroke-width="1.25" stroke-linejoin="round"/>
<path d="M997.0,302.2 L1003.5,302.2 L1004.0,297.2 L1012.0,297.2 L1012.5,301.7 L1028.5,301.7 L1029.0,298.2 L1032.5,298.2 L1033.0,296.7 L1042.5,296.7 L1043.0,301.7 L1053.5,301.7" fill="none" stroke="#9af7cf" stroke-width="1.25" stroke-linejoin="round"/>
<rect x="646" y="389.4" width="210.79999999999995" height="55.0" fill="#2f2f33" filter="url(#ps)"/>
<rect x="646" y="444.40" width="210.79999999999995" height="1" fill="#8ad6b8" opacity="0.75"/>
<text x="674.95" y="420.00" font-size="9.8" font-weight="bold" fill="#f2f2f2" text-anchor="middle" textLength="38.47" lengthAdjust="spacingAndGlyphs" style="" filter="url(#ts)"  stroke="#f2f2f2" stroke-width="0.3">SUB OSC</text>
<path d="M713.80,418.91 A9.80,9.80 0 1 1 726.40,418.91" fill="none" stroke="#55555b" stroke-width="2.6" stroke-linecap="butt"/>
<path d="M713.80,418.91 A9.80,9.80 0 0 1 710.63,408.86" fill="none" stroke="#5fd4a3" stroke-width="2.8000000000000003" stroke-linecap="butt"/>
<circle cx="720.10" cy="412.00" r="8.60" fill="#1d1d21"/>
<circle cx="720.10" cy="411.40" r="7.70" fill="url(#kb)"/>
<line x1="719.02" y1="409.53" x2="716.71" y2="405.53" stroke="#efefef" stroke-width="1.60" stroke-linecap="butt"/>
<text x="720.95" y="431.90" font-size="8.2" font-weight="bold" fill="#cfcfd2" text-anchor="middle" textLength="30.48" lengthAdjust="spacingAndGlyphs" style="" filter="url(#ts)"  stroke="#cfcfd2" stroke-width="0.3">VOLUME</text>
<rect x="751.80" y="404.00" width="7.4" height="7.4" fill="#1e1e21" opacity="0.7"/>
<rect x="751.20" y="402.80" width="7.4" height="7.4" fill="#4f4f53"/>
<text x="770.45" y="409.30" font-size="8.2" font-weight="bold" fill="#cfcfd2" text-anchor="middle" textLength="17.28" lengthAdjust="spacingAndGlyphs" style="" filter="url(#ts)"  stroke="#cfcfd2" stroke-width="0.3">SAW</text>
<rect x="751.80" y="415.50" width="7.4" height="7.4" fill="#1e1e21" opacity="0.7"/>
<rect x="751.20" y="414.30" width="7.4" height="7.4" fill="#d4eaf8"/>
<text x="776.70" y="420.80" font-size="8.2" font-weight="bold" fill="#cfcfd2" text-anchor="middle" textLength="29.79" lengthAdjust="spacingAndGlyphs" style="" filter="url(#ts)"  stroke="#cfcfd2" stroke-width="0.3">SQUARE</text>
<rect x="751.80" y="427.10" width="7.4" height="7.4" fill="#1e1e21" opacity="0.7"/>
<rect x="751.20" y="425.90" width="7.4" height="7.4" fill="#4f4f53"/>
<text x="780.90" y="432.40" font-size="8.2" font-weight="bold" fill="#cfcfd2" text-anchor="middle" textLength="38.21" lengthAdjust="spacingAndGlyphs" style="" filter="url(#ts)"  stroke="#cfcfd2" stroke-width="0.3">TRIANGLE</text>
<rect x="814.70" y="403.20" width="7.8" height="7.8" fill="#1e1e21" opacity="0.7"/>
<rect x="814.10" y="402.00" width="7.8" height="7.8" fill="#4f4f53"/>
<text x="818.00" y="420.90" font-size="8.2" font-weight="bold" fill="#cfcfd2" text-anchor="middle" textLength="6.12" lengthAdjust="spacingAndGlyphs" style="" filter="url(#ts)"  stroke="#cfcfd2" stroke-width="0.3">-2</text>
<rect x="826.80" y="403.20" width="7.8" height="7.8" fill="#1e1e21" opacity="0.7"/>
<rect x="826.20" y="402.00" width="7.8" height="7.8" fill="#d4eaf8"/>
<text x="830.10" y="420.90" font-size="8.2" font-weight="bold" fill="#cfcfd2" text-anchor="middle" textLength="6.12" lengthAdjust="spacingAndGlyphs" style="" filter="url(#ts)"  stroke="#cfcfd2" stroke-width="0.3">-1</text>
<rect x="839.80" y="403.20" width="7.8" height="7.8" fill="#1e1e21" opacity="0.7"/>
<rect x="839.20" y="402.00" width="7.8" height="7.8" fill="#4f4f53"/>
<text x="843.10" y="420.90" font-size="8.2" font-weight="bold" fill="#cfcfd2" text-anchor="middle" textLength="3.83" lengthAdjust="spacingAndGlyphs" style="" filter="url(#ts)"  stroke="#cfcfd2" stroke-width="0.3">0</text>
<text x="830.10" y="431.90" font-size="8.2" font-weight="bold" fill="#cfcfd2" text-anchor="middle" textLength="29.79" lengthAdjust="spacingAndGlyphs" style="" filter="url(#ts)"  stroke="#cfcfd2" stroke-width="0.3">OCTAVE</text>
<rect x="868.4" y="389.4" width="199.5000000000001" height="55.0" fill="#2f2f33" filter="url(#ps)"/>
<rect x="868.4" y="444.40" width="199.5000000000001" height="1" fill="#8ad6b8" opacity="0.75"/>
<text x="892.50" y="420.00" font-size="9.8" font-weight="bold" fill="#f2f2f2" text-anchor="middle" textLength="26.20" lengthAdjust="spacingAndGlyphs" style="" filter="url(#ts)"  stroke="#f2f2f2" stroke-width="0.3">PITCH</text>
<path d="M924.90,419.71 A9.80,9.80 0 1 1 937.50,419.71" fill="none" stroke="#55555b" stroke-width="2.6" stroke-linecap="butt"/>
<circle cx="931.20" cy="412.80" r="8.60" fill="#1d1d21"/>
<circle cx="931.20" cy="412.20" r="7.70" fill="url(#kb)"/>
<line x1="929.81" y1="413.85" x2="926.84" y2="417.39" stroke="#efefef" stroke-width="1.60" stroke-linecap="butt"/>
<text x="931.85" y="432.00" font-size="8.2" font-weight="bold" fill="#cfcfd2" text-anchor="middle" textLength="24.87" lengthAdjust="spacingAndGlyphs" style="" filter="url(#ts)"  stroke="#cfcfd2" stroke-width="0.3">PORTA</text>
<rect x="961.60" y="404.50" width="7.4" height="7.4" fill="#1e1e21" opacity="0.7"/>
<rect x="961.00" y="403.30" width="7.4" height="7.4" fill="#4f4f53"/>
<text x="964.70" y="422.10" font-size="8.2" font-weight="bold" fill="#cfcfd2" text-anchor="middle" textLength="6.12" lengthAdjust="spacingAndGlyphs" style="" filter="url(#ts)"  stroke="#cfcfd2" stroke-width="0.3">-2</text>
<rect x="974.20" y="404.50" width="7.4" height="7.4" fill="#1e1e21" opacity="0.7"/>
<rect x="973.60" y="403.30" width="7.4" height="7.4" fill="#4f4f53"/>
<text x="977.30" y="422.10" font-size="8.2" font-weight="bold" fill="#cfcfd2" text-anchor="middle" textLength="6.12" lengthAdjust="spacingAndGlyphs" style="" filter="url(#ts)"  stroke="#cfcfd2" stroke-width="0.3">-1</text>
<rect x="986.80" y="404.50" width="7.4" height="7.4" fill="#1e1e21" opacity="0.7"/>
<rect x="986.20" y="403.30" width="7.4" height="7.4" fill="#4f4f53"/>
<text x="989.90" y="422.10" font-size="8.2" font-weight="bold" fill="#cfcfd2" text-anchor="middle" textLength="3.83" lengthAdjust="spacingAndGlyphs" style="" filter="url(#ts)"  stroke="#cfcfd2" stroke-width="0.3">0</text>
<rect x="999.40" y="404.50" width="7.4" height="7.4" fill="#1e1e21" opacity="0.7"/>
<rect x="998.80" y="403.30" width="7.4" height="7.4" fill="#d4eaf8"/>
<text x="1002.50" y="422.10" font-size="8.2" font-weight="bold" fill="#cfcfd2" text-anchor="middle" textLength="3.83" lengthAdjust="spacingAndGlyphs" style="" filter="url(#ts)"  stroke="#cfcfd2" stroke-width="0.3">1</text>
<rect x="1011.90" y="404.50" width="7.4" height="7.4" fill="#1e1e21" opacity="0.7"/>
<rect x="1011.30" y="403.30" width="7.4" height="7.4" fill="#4f4f53"/>
<text x="1015.00" y="422.10" font-size="8.2" font-weight="bold" fill="#cfcfd2" text-anchor="middle" textLength="3.83" lengthAdjust="spacingAndGlyphs" style="" filter="url(#ts)"  stroke="#cfcfd2" stroke-width="0.3">2</text>
<text x="989.75" y="432.00" font-size="8.2" font-weight="bold" fill="#cfcfd2" text-anchor="middle" textLength="40.08" lengthAdjust="spacingAndGlyphs" style="" filter="url(#ts)"  stroke="#cfcfd2" stroke-width="0.3">M. OCTAVE</text>
<rect x="1040.20" y="404.50" width="7.4" height="7.4" fill="#1e1e21" opacity="0.7"/>
<rect x="1039.60" y="403.30" width="7.4" height="7.4" fill="#4f4f53"/>
<text x="1043.40" y="422.00" font-size="8.2" font-weight="bold" fill="#cfcfd2" text-anchor="middle" textLength="31.21" lengthAdjust="spacingAndGlyphs" style="" filter="url(#ts)"  stroke="#cfcfd2" stroke-width="0.3">ALWAYS</text>
<text x="1043.00" y="432.00" font-size="8.2" font-weight="bold" fill="#cfcfd2" text-anchor="middle" textLength="21.97" lengthAdjust="spacingAndGlyphs" style="" filter="url(#ts)"  stroke="#cfcfd2" stroke-width="0.3">GLIDE</text>
<rect x="649.5" y="457.8" width="160.20000000000005" height="156.09999999999997" fill="#2f2f33" filter="url(#ps)"/>
<rect x="649.5" y="613.90" width="160.20000000000005" height="1" fill="#8ad6b8" opacity="0.75"/>
<text x="728.45" y="473.70" font-size="9.6" font-weight="bold" fill="#f2f2f2" text-anchor="middle" textLength="68.93" lengthAdjust="spacingAndGlyphs" style="" filter="url(#ts)"  stroke="#f2f2f2" stroke-width="0.3">MATRIX ASSIGN</text>
<circle cx="658.10" cy="481.40" r="2.5" fill="#7a7a7e"/>
<path d="M661.34,498.44 A8.80,8.80 0 1 1 672.66,498.44" fill="none" stroke="#55555b" stroke-width="2.4" stroke-linecap="butt"/>
<circle cx="667.00" cy="492.30" r="7.80" fill="#1d1d21"/>
<circle cx="667.00" cy="491.70" r="6.90" fill="url(#kb)"/>
<line x1="667.00" y1="489.77" x2="667.00" y2="485.63" stroke="#efefef" stroke-width="1.60" stroke-linecap="butt"/>
<rect x="681.80" y="485.30" width="56.00" height="15.30" fill="#1c1c1f"/>
<rect x="681.80" y="484.30" width="56.00" height="14.30" fill="#39393d"/>
<rect x="682.30" y="484.80" width="55.00" height="13.30" fill="none" stroke="#46464a" stroke-width="0.8"/>
<text x="709.80" y="494.45" font-size="8.8" font-weight="bold" fill="#d2d2d4" text-anchor="middle" textLength="44.77" lengthAdjust="spacingAndGlyphs" style="" filter="url(#ts)" stroke="#dcdcde" stroke-width="0.05">Mod Wheel</text>
<path d="M739.7,487.6 L744.2,490.9 L739.7,494.2 Z" fill="#8a8a8e"/>
<rect x="746.20" y="485.30" width="54.50" height="15.30" fill="#1c1c1f"/>
<rect x="746.20" y="484.30" width="54.50" height="14.30" fill="#39393d"/>
<rect x="746.70" y="484.80" width="53.50" height="13.30" fill="none" stroke="#46464a" stroke-width="0.8"/>
<text x="773.45" y="494.45" font-size="8.8" font-weight="bold" fill="#d2d2d4" text-anchor="middle" textLength="28.98" lengthAdjust="spacingAndGlyphs" style="" filter="url(#ts)" stroke="#dcdcde" stroke-width="0.05">MstCut</text>
<circle cx="658.10" cy="508.30" r="2.5" fill="#7a7a7e"/>
<path d="M661.34,525.34 A8.80,8.80 0 1 1 672.66,525.34" fill="none" stroke="#55555b" stroke-width="2.4" stroke-linecap="butt"/>
<circle cx="667.00" cy="519.20" r="7.80" fill="#1d1d21"/>
<circle cx="667.00" cy="518.60" r="6.90" fill="url(#kb)"/>
<line x1="667.00" y1="516.67" x2="667.00" y2="512.53" stroke="#efefef" stroke-width="1.60" stroke-linecap="butt"/>
<rect x="681.80" y="512.20" width="56.00" height="15.30" fill="#1c1c1f"/>
<rect x="681.80" y="511.20" width="56.00" height="14.30" fill="#39393d"/>
<rect x="682.30" y="511.70" width="55.00" height="13.30" fill="none" stroke="#46464a" stroke-width="0.8"/>
<text x="709.80" y="521.35" font-size="8.8" font-weight="bold" fill="#d2d2d4" text-anchor="middle" textLength="19.49" lengthAdjust="spacingAndGlyphs" style="" filter="url(#ts)" stroke="#dcdcde" stroke-width="0.05">none</text>
<path d="M739.7,514.5 L744.2,517.8 L739.7,521.1 Z" fill="#8a8a8e"/>
<rect x="746.20" y="512.20" width="54.50" height="15.30" fill="#1c1c1f"/>
<rect x="746.20" y="511.20" width="54.50" height="14.30" fill="#39393d"/>
<rect x="746.70" y="511.70" width="53.50" height="13.30" fill="none" stroke="#46464a" stroke-width="0.8"/>
<text x="773.45" y="521.35" font-size="8.8" font-weight="bold" fill="#d2d2d4" text-anchor="middle" textLength="33.03" lengthAdjust="spacingAndGlyphs" style="" filter="url(#ts)" stroke="#dcdcde" stroke-width="0.05">(assign)</text>
<circle cx="658.10" cy="535.20" r="2.5" fill="#7a7a7e"/>
<path d="M661.34,552.24 A8.80,8.80 0 1 1 672.66,552.24" fill="none" stroke="#55555b" stroke-width="2.4" stroke-linecap="butt"/>
<circle cx="667.00" cy="546.10" r="7.80" fill="#1d1d21"/>
<circle cx="667.00" cy="545.50" r="6.90" fill="url(#kb)"/>
<line x1="667.00" y1="543.57" x2="667.00" y2="539.43" stroke="#efefef" stroke-width="1.60" stroke-linecap="butt"/>
<rect x="681.80" y="539.10" width="56.00" height="15.30" fill="#1c1c1f"/>
<rect x="681.80" y="538.10" width="56.00" height="14.30" fill="#39393d"/>
<rect x="682.30" y="538.60" width="55.00" height="13.30" fill="none" stroke="#46464a" stroke-width="0.8"/>
<text x="709.80" y="548.25" font-size="8.8" font-weight="bold" fill="#d2d2d4" text-anchor="middle" textLength="19.49" lengthAdjust="spacingAndGlyphs" style="" filter="url(#ts)" stroke="#dcdcde" stroke-width="0.05">none</text>
<path d="M739.7,541.4 L744.2,544.7 L739.7,548.0 Z" fill="#8a8a8e"/>
<rect x="746.20" y="539.10" width="54.50" height="15.30" fill="#1c1c1f"/>
<rect x="746.20" y="538.10" width="54.50" height="14.30" fill="#39393d"/>
<rect x="746.70" y="538.60" width="53.50" height="13.30" fill="none" stroke="#46464a" stroke-width="0.8"/>
<text x="773.45" y="548.25" font-size="8.8" font-weight="bold" fill="#d2d2d4" text-anchor="middle" textLength="33.03" lengthAdjust="spacingAndGlyphs" style="" filter="url(#ts)" stroke="#dcdcde" stroke-width="0.05">(assign)</text>
<circle cx="658.10" cy="562.10" r="2.5" fill="#7a7a7e"/>
<path d="M661.34,579.14 A8.80,8.80 0 1 1 672.66,579.14" fill="none" stroke="#55555b" stroke-width="2.4" stroke-linecap="butt"/>
<circle cx="667.00" cy="573.00" r="7.80" fill="#1d1d21"/>
<circle cx="667.00" cy="572.40" r="6.90" fill="url(#kb)"/>
<line x1="667.00" y1="570.47" x2="667.00" y2="566.33" stroke="#efefef" stroke-width="1.60" stroke-linecap="butt"/>
<rect x="681.80" y="566.00" width="56.00" height="15.30" fill="#1c1c1f"/>
<rect x="681.80" y="565.00" width="56.00" height="14.30" fill="#39393d"/>
<rect x="682.30" y="565.50" width="55.00" height="13.30" fill="none" stroke="#46464a" stroke-width="0.8"/>
<text x="709.80" y="575.15" font-size="8.8" font-weight="bold" fill="#d2d2d4" text-anchor="middle" textLength="19.49" lengthAdjust="spacingAndGlyphs" style="" filter="url(#ts)" stroke="#dcdcde" stroke-width="0.05">none</text>
<path d="M739.7,568.3 L744.2,571.6 L739.7,574.9 Z" fill="#8a8a8e"/>
<rect x="746.20" y="566.00" width="54.50" height="15.30" fill="#1c1c1f"/>
<rect x="746.20" y="565.00" width="54.50" height="14.30" fill="#39393d"/>
<rect x="746.70" y="565.50" width="53.50" height="13.30" fill="none" stroke="#46464a" stroke-width="0.8"/>
<text x="773.45" y="575.15" font-size="8.8" font-weight="bold" fill="#d2d2d4" text-anchor="middle" textLength="33.03" lengthAdjust="spacingAndGlyphs" style="" filter="url(#ts)" stroke="#dcdcde" stroke-width="0.05">(assign)</text>
<circle cx="658.10" cy="589.00" r="2.5" fill="#7a7a7e"/>
<path d="M661.34,606.04 A8.80,8.80 0 1 1 672.66,606.04" fill="none" stroke="#55555b" stroke-width="2.4" stroke-linecap="butt"/>
<circle cx="667.00" cy="599.90" r="7.80" fill="#1d1d21"/>
<circle cx="667.00" cy="599.30" r="6.90" fill="url(#kb)"/>
<line x1="667.00" y1="597.37" x2="667.00" y2="593.23" stroke="#efefef" stroke-width="1.60" stroke-linecap="butt"/>
<rect x="681.80" y="592.90" width="56.00" height="15.30" fill="#1c1c1f"/>
<rect x="681.80" y="591.90" width="56.00" height="14.30" fill="#39393d"/>
<rect x="682.30" y="592.40" width="55.00" height="13.30" fill="none" stroke="#46464a" stroke-width="0.8"/>
<text x="709.80" y="602.05" font-size="8.8" font-weight="bold" fill="#d2d2d4" text-anchor="middle" textLength="19.49" lengthAdjust="spacingAndGlyphs" style="" filter="url(#ts)" stroke="#dcdcde" stroke-width="0.05">none</text>
<path d="M739.7,595.2 L744.2,598.5 L739.7,601.8 Z" fill="#8a8a8e"/>
<rect x="746.20" y="592.90" width="54.50" height="15.30" fill="#1c1c1f"/>
<rect x="746.20" y="591.90" width="54.50" height="14.30" fill="#39393d"/>
<rect x="746.70" y="592.40" width="53.50" height="13.30" fill="none" stroke="#46464a" stroke-width="0.8"/>
<text x="773.45" y="602.05" font-size="8.8" font-weight="bold" fill="#d2d2d4" text-anchor="middle" textLength="33.03" lengthAdjust="spacingAndGlyphs" style="" filter="url(#ts)" stroke="#dcdcde" stroke-width="0.05">(assign)</text>
<rect x="819" y="457.8" width="120.10000000000002" height="154.8" fill="#2f2f33" filter="url(#ps)"/>
<rect x="819" y="612.60" width="120.10000000000002" height="1" fill="#8ad6b8" opacity="0.75"/>
<circle cx="836.5" cy="471.7" r="3.3" fill="#77777b"/>
<text x="879.55" y="474.50" font-size="9.4" font-weight="bold" fill="#f2f2f2" text-anchor="middle" textLength="42.51" lengthAdjust="spacingAndGlyphs" style="" filter="url(#ts)"  stroke="#f2f2f2" stroke-width="0.3">MOD ENV 1</text>
<rect x="921.6" y="466.3" width="8.8" height="8.8" rx="2" fill="#4a4a4e" filter="url(#ps)"/>
<text x="926.00" y="473.60" font-size="7" font-weight="bold" fill="#e0e0e0" text-anchor="middle" textLength="4.81" lengthAdjust="spacingAndGlyphs" style="" filter="url(#ts)"  stroke="#e0e0e0" stroke-width="0.3">C</text>
<path d="M840.50,509.01 A9.80,9.80 0 1 1 853.10,509.01" fill="none" stroke="#55555b" stroke-width="2.6" stroke-linecap="butt"/>
<circle cx="846.80" cy="502.10" r="8.60" fill="#1d1d21"/>
<circle cx="846.80" cy="501.50" r="7.70" fill="url(#kb)"/>
<line x1="845.15" y1="502.89" x2="841.61" y2="505.86" stroke="#efefef" stroke-width="1.60" stroke-linecap="butt"/>
<text x="847.40" y="520.50" font-size="8.2" font-weight="bold" fill="#cfcfd2" text-anchor="middle" textLength="29.61" lengthAdjust="spacingAndGlyphs" style="" filter="url(#ts)"  stroke="#cfcfd2" stroke-width="0.3">ATTACK</text>
<path d="M872.60,509.01 A9.80,9.80 0 1 1 885.20,509.01" fill="none" stroke="#55555b" stroke-width="2.6" stroke-linecap="butt"/>
<path d="M872.60,509.01 A9.80,9.80 0 0 1 871.18,507.53" fill="none" stroke="#5fd4a3" stroke-width="2.8000000000000003" stroke-linecap="butt"/>
<circle cx="878.90" cy="502.10" r="8.60" fill="#1d1d21"/>
<circle cx="878.90" cy="501.50" r="7.70" fill="url(#kb)"/>
<line x1="877.25" y1="502.89" x2="873.71" y2="505.86" stroke="#efefef" stroke-width="1.60" stroke-linecap="butt"/>
<text x="879.40" y="520.50" font-size="8.2" font-weight="bold" fill="#cfcfd2" text-anchor="middle" textLength="24.79" lengthAdjust="spacingAndGlyphs" style="" filter="url(#ts)"  stroke="#cfcfd2" stroke-width="0.3">DECAY</text>
<path d="M904.70,509.01 A9.80,9.80 0 1 1 917.30,509.01" fill="none" stroke="#55555b" stroke-width="2.6" stroke-linecap="butt"/>
<circle cx="911.00" cy="502.10" r="8.60" fill="#1d1d21"/>
<circle cx="911.00" cy="501.50" r="7.70" fill="url(#kb)"/>
<line x1="911.37" y1="499.38" x2="912.18" y2="494.83" stroke="#efefef" stroke-width="1.60" stroke-linecap="butt"/>
<text x="911.95" y="520.50" font-size="8.2" font-weight="bold" fill="#cfcfd2" text-anchor="middle" textLength="32.74" lengthAdjust="spacingAndGlyphs" style="" filter="url(#ts)"  stroke="#cfcfd2" stroke-width="0.3">TENSION</text>
<circle cx="831.00" cy="538.50" r="2.5" fill="#f4f4f4"/>
<path d="M840.3,539.8 V540.1 H857 M840.3,557.8 V559.9 H857" fill="none" stroke="#444448" stroke-width="0.8"/>
<path d="M834.64,555.54 A8.80,8.80 0 1 1 845.96,555.54" fill="none" stroke="#55555b" stroke-width="2.4" stroke-linecap="butt"/>
<path d="M840.30,540.00 A8.80,8.80 0 0 1 843.31,540.53" fill="none" stroke="#5fd4a3" stroke-width="2.6" stroke-linecap="butt"/>
<circle cx="840.30" cy="549.40" r="7.80" fill="#1d1d21"/>
<circle cx="840.30" cy="548.80" r="6.90" fill="url(#kb)"/>
<line x1="840.96" y1="546.98" x2="842.38" y2="543.09" stroke="#efefef" stroke-width="1.60" stroke-linecap="butt"/>
<rect x="857.00" y="535.10" width="70.00" height="14.60" fill="#1c1c1f"/>
<rect x="857.00" y="534.10" width="70.00" height="13.60" fill="#39393d"/>
<rect x="857.50" y="534.60" width="69.00" height="12.60" fill="none" stroke="#46464a" stroke-width="0.8"/>
<text x="892.00" y="543.90" font-size="8.8" font-weight="bold" fill="#d2d2d4" text-anchor="middle" textLength="45.61" lengthAdjust="spacingAndGlyphs" style="" filter="url(#ts)" stroke="#dcdcde" stroke-width="0.05">OscA1Sem</text>
<rect x="857.00" y="552.40" width="70.00" height="14.60" fill="#1c1c1f"/>
<rect x="857.00" y="551.40" width="70.00" height="13.60" fill="#39393d"/>
<rect x="857.50" y="551.90" width="69.00" height="12.60" fill="none" stroke="#46464a" stroke-width="0.8"/>
<text x="892.00" y="561.20" font-size="8.8" font-weight="bold" fill="#d2d2d4" text-anchor="middle" textLength="33.03" lengthAdjust="spacingAndGlyphs" style="" filter="url(#ts)" stroke="#dcdcde" stroke-width="0.05">(assign)</text>
<circle cx="831.00" cy="576.00" r="2.5" fill="#7a7a7e"/>
<path d="M840.3,577.3 V577.4 H857 M840.3,595.3 V597.4 H857" fill="none" stroke="#444448" stroke-width="0.8"/>
<path d="M834.64,593.04 A8.80,8.80 0 1 1 845.96,593.04" fill="none" stroke="#55555b" stroke-width="2.4" stroke-linecap="butt"/>
<circle cx="840.30" cy="586.90" r="7.80" fill="#1d1d21"/>
<circle cx="840.30" cy="586.30" r="6.90" fill="url(#kb)"/>
<line x1="840.30" y1="584.37" x2="840.30" y2="580.23" stroke="#efefef" stroke-width="1.60" stroke-linecap="butt"/>
<rect x="857.00" y="572.40" width="70.00" height="14.60" fill="#1c1c1f"/>
<rect x="857.00" y="571.40" width="70.00" height="13.60" fill="#39393d"/>
<rect x="857.50" y="571.90" width="69.00" height="12.60" fill="none" stroke="#46464a" stroke-width="0.8"/>
<text x="892.00" y="581.20" font-size="8.8" font-weight="bold" fill="#d2d2d4" text-anchor="middle" textLength="33.03" lengthAdjust="spacingAndGlyphs" style="" filter="url(#ts)" stroke="#dcdcde" stroke-width="0.05">(assign)</text>
<rect x="857.00" y="589.90" width="70.00" height="14.60" fill="#1c1c1f"/>
<rect x="857.00" y="588.90" width="70.00" height="13.60" fill="#39393d"/>
<rect x="857.50" y="589.40" width="69.00" height="12.60" fill="none" stroke="#46464a" stroke-width="0.8"/>
<text x="892.00" y="598.70" font-size="8.8" font-weight="bold" fill="#d2d2d4" text-anchor="middle" textLength="33.03" lengthAdjust="spacingAndGlyphs" style="" filter="url(#ts)" stroke="#dcdcde" stroke-width="0.05">(assign)</text>
<rect x="948" y="457.8" width="120.09999999999991" height="154.8" fill="#2f2f33" filter="url(#ps)"/>
<rect x="948" y="612.60" width="120.09999999999991" height="1" fill="#8ad6b8" opacity="0.75"/>
<circle cx="965.5" cy="471.7" r="3.3" fill="#bdbdc1"/>
<text x="1008.55" y="474.50" font-size="9.4" font-weight="bold" fill="#f2f2f2" text-anchor="middle" textLength="42.51" lengthAdjust="spacingAndGlyphs" style="" filter="url(#ts)"  stroke="#f2f2f2" stroke-width="0.3">MOD ENV 2</text>
<rect x="1050.6" y="466.3" width="8.8" height="8.8" rx="2" fill="#4a4a4e" filter="url(#ps)"/>
<text x="1055.00" y="473.60" font-size="7" font-weight="bold" fill="#e0e0e0" text-anchor="middle" textLength="4.81" lengthAdjust="spacingAndGlyphs" style="" filter="url(#ts)"  stroke="#e0e0e0" stroke-width="0.3">C</text>
<path d="M969.50,509.01 A9.80,9.80 0 1 1 982.10,509.01" fill="none" stroke="#55555b" stroke-width="2.6" stroke-linecap="butt"/>
<circle cx="975.80" cy="502.10" r="8.60" fill="#1d1d21"/>
<circle cx="975.80" cy="501.50" r="7.70" fill="url(#kb)"/>
<line x1="974.15" y1="502.89" x2="970.61" y2="505.86" stroke="#efefef" stroke-width="1.60" stroke-linecap="butt"/>
<text x="976.40" y="520.50" font-size="8.2" font-weight="bold" fill="#cfcfd2" text-anchor="middle" textLength="29.61" lengthAdjust="spacingAndGlyphs" style="" filter="url(#ts)"  stroke="#cfcfd2" stroke-width="0.3">ATTACK</text>
<path d="M1001.60,509.01 A9.80,9.80 0 1 1 1014.20,509.01" fill="none" stroke="#55555b" stroke-width="2.6" stroke-linecap="butt"/>
<path d="M1001.60,509.01 A9.80,9.80 0 0 1 999.41,496.60" fill="none" stroke="#5fd4a3" stroke-width="2.8000000000000003" stroke-linecap="butt"/>
<circle cx="1007.90" cy="502.10" r="8.60" fill="#1d1d21"/>
<circle cx="1007.90" cy="501.50" r="7.70" fill="url(#kb)"/>
<line x1="1006.03" y1="500.42" x2="1002.03" y2="498.11" stroke="#efefef" stroke-width="1.60" stroke-linecap="butt"/>
<text x="1008.40" y="520.50" font-size="8.2" font-weight="bold" fill="#cfcfd2" text-anchor="middle" textLength="24.79" lengthAdjust="spacingAndGlyphs" style="" filter="url(#ts)"  stroke="#cfcfd2" stroke-width="0.3">DECAY</text>
<path d="M1033.70,509.01 A9.80,9.80 0 1 1 1046.30,509.01" fill="none" stroke="#55555b" stroke-width="2.6" stroke-linecap="butt"/>
<circle cx="1040.00" cy="502.10" r="8.60" fill="#1d1d21"/>
<circle cx="1040.00" cy="501.50" r="7.70" fill="url(#kb)"/>
<line x1="1040.00" y1="499.34" x2="1040.00" y2="494.72" stroke="#efefef" stroke-width="1.60" stroke-linecap="butt"/>
<text x="1040.95" y="520.50" font-size="8.2" font-weight="bold" fill="#cfcfd2" text-anchor="middle" textLength="32.74" lengthAdjust="spacingAndGlyphs" style="" filter="url(#ts)"  stroke="#cfcfd2" stroke-width="0.3">TENSION</text>
<circle cx="960.00" cy="538.50" r="2.5" fill="#7a7a7e"/>
<path d="M969.3,539.8 V540.1 H986 M969.3,557.8 V559.9 H986" fill="none" stroke="#444448" stroke-width="0.8"/>
<path d="M963.64,555.54 A8.80,8.80 0 1 1 974.96,555.54" fill="none" stroke="#55555b" stroke-width="2.4" stroke-linecap="butt"/>
<circle cx="969.30" cy="549.40" r="7.80" fill="#1d1d21"/>
<circle cx="969.30" cy="548.80" r="6.90" fill="url(#kb)"/>
<line x1="969.30" y1="546.87" x2="969.30" y2="542.73" stroke="#efefef" stroke-width="1.60" stroke-linecap="butt"/>
<rect x="986.00" y="535.10" width="70.00" height="14.60" fill="#1c1c1f"/>
<rect x="986.00" y="534.10" width="70.00" height="13.60" fill="#39393d"/>
<rect x="986.50" y="534.60" width="69.00" height="12.60" fill="none" stroke="#46464a" stroke-width="0.8"/>
<text x="1021.00" y="543.90" font-size="8.8" font-weight="bold" fill="#d2d2d4" text-anchor="middle" textLength="33.03" lengthAdjust="spacingAndGlyphs" style="" filter="url(#ts)" stroke="#dcdcde" stroke-width="0.05">(assign)</text>
<rect x="986.00" y="552.40" width="70.00" height="14.60" fill="#1c1c1f"/>
<rect x="986.00" y="551.40" width="70.00" height="13.60" fill="#39393d"/>
<rect x="986.50" y="551.90" width="69.00" height="12.60" fill="none" stroke="#46464a" stroke-width="0.8"/>
<text x="1021.00" y="561.20" font-size="8.8" font-weight="bold" fill="#d2d2d4" text-anchor="middle" textLength="33.03" lengthAdjust="spacingAndGlyphs" style="" filter="url(#ts)" stroke="#dcdcde" stroke-width="0.05">(assign)</text>
<circle cx="960.00" cy="576.00" r="2.5" fill="#7a7a7e"/>
<path d="M969.3,577.3 V577.4 H986 M969.3,595.3 V597.4 H986" fill="none" stroke="#444448" stroke-width="0.8"/>
<path d="M963.64,593.04 A8.80,8.80 0 1 1 974.96,593.04" fill="none" stroke="#55555b" stroke-width="2.4" stroke-linecap="butt"/>
<circle cx="969.30" cy="586.90" r="7.80" fill="#1d1d21"/>
<circle cx="969.30" cy="586.30" r="6.90" fill="url(#kb)"/>
<line x1="969.30" y1="584.37" x2="969.30" y2="580.23" stroke="#efefef" stroke-width="1.60" stroke-linecap="butt"/>
<rect x="986.00" y="572.40" width="70.00" height="14.60" fill="#1c1c1f"/>
<rect x="986.00" y="571.40" width="70.00" height="13.60" fill="#39393d"/>
<rect x="986.50" y="571.90" width="69.00" height="12.60" fill="none" stroke="#46464a" stroke-width="0.8"/>
<text x="1021.00" y="581.20" font-size="8.8" font-weight="bold" fill="#d2d2d4" text-anchor="middle" textLength="33.03" lengthAdjust="spacingAndGlyphs" style="" filter="url(#ts)" stroke="#dcdcde" stroke-width="0.05">(assign)</text>
<rect x="986.00" y="589.90" width="70.00" height="14.60" fill="#1c1c1f"/>
<rect x="986.00" y="588.90" width="70.00" height="13.60" fill="#39393d"/>
<rect x="986.50" y="589.40" width="69.00" height="12.60" fill="none" stroke="#46464a" stroke-width="0.8"/>
<text x="1021.00" y="598.70" font-size="8.8" font-weight="bold" fill="#d2d2d4" text-anchor="middle" textLength="33.03" lengthAdjust="spacingAndGlyphs" style="" filter="url(#ts)" stroke="#dcdcde" stroke-width="0.05">(assign)</text>
<rect x="1081.4" y="122.9" width="119.79999999999995" height="155.4" fill="#2f2f33" filter="url(#ps)"/>
<rect x="1081.4" y="278.30" width="119.79999999999995" height="1" fill="#8ad6b8" opacity="0.75"/>
<circle cx="1099.2" cy="138.3" r="3.7" fill="#c9c9cc"/>
<text x="1141.80" y="141.10" font-size="9.4" font-weight="bold" fill="#f2f2f2" text-anchor="middle" textLength="20.82" lengthAdjust="spacingAndGlyphs" style="" filter="url(#ts)"  stroke="#f2f2f2" stroke-width="0.3">LFO 1</text>
<rect x="1184.2" y="133.3" width="8.4" height="7.8" rx="2" fill="#48484c" filter="url(#ps)"/>
<text x="1188.40" y="139.80" font-size="6.8" font-weight="bold" fill="#e0e0e0" text-anchor="middle" textLength="4.41" lengthAdjust="spacingAndGlyphs" style="" filter="url(#ts)"  stroke="#e0e0e0" stroke-width="0.3">C</text>
<path d="M1100.97,173.96 A10.00,10.00 0 1 1 1113.83,173.96" fill="none" stroke="#55555b" stroke-width="2.6" stroke-linecap="butt"/>
<path d="M1100.97,173.96 A10.00,10.00 0 1 1 1113.83,173.96" fill="none" stroke="#5fd4a3" stroke-width="2.8000000000000003" stroke-linecap="butt"/>
<circle cx="1107.40" cy="166.90" r="8.70" fill="#1d1d21"/>
<circle cx="1107.40" cy="166.30" r="7.80" fill="url(#kb)"/>
<line x1="1108.94" y1="167.84" x2="1112.25" y2="171.15" stroke="#efefef" stroke-width="1.60" stroke-linecap="butt"/>
<text x="1107.70" y="186.00" font-size="8.2" font-weight="bold" fill="#cfcfd2" text-anchor="middle" textLength="19.98" lengthAdjust="spacingAndGlyphs" style="" filter="url(#ts)"  stroke="#cfcfd2" stroke-width="0.3">RATE</text>
<rect x="1130.00" y="155.50" width="7.6" height="7.6" fill="#1e1e21" opacity="0.7"/>
<rect x="1129.40" y="154.30" width="7.6" height="7.6" fill="#4f4f53"/>
<circle cx="1145.4" cy="158.3" r="3.6" fill="none" stroke="#eee" stroke-width="1"/><path d="M1145.4,155.8 V158.5 H1147.6" fill="none" stroke="#eee" stroke-width="0.9"/>
<rect x="1157.70" y="155.50" width="7.8" height="7.8" fill="#1e1e21" opacity="0.7"/>
<rect x="1157.10" y="154.30" width="7.8" height="7.8" fill="#d4eaf8"/>
<text x="1178.55" y="161.10" font-size="8.2" font-weight="bold" fill="#cfcfd2" text-anchor="middle" textLength="18.88" lengthAdjust="spacingAndGlyphs" style="" filter="url(#ts)"  stroke="#cfcfd2" stroke-width="0.3">FREE</text>
<rect x="1157.70" y="169.20" width="7.8" height="7.8" fill="#1e1e21" opacity="0.7"/>
<rect x="1157.10" y="168.00" width="7.8" height="7.8" fill="#4f4f53"/>
<text x="1180.00" y="174.60" font-size="8.2" font-weight="bold" fill="#cfcfd2" text-anchor="middle" textLength="21.81" lengthAdjust="spacingAndGlyphs" style="" filter="url(#ts)"  stroke="#cfcfd2" stroke-width="0.3">MONO</text>
<rect x="1157.70" y="182.30" width="7.8" height="7.8" fill="#1e1e21" opacity="0.7"/>
<rect x="1157.10" y="181.10" width="7.8" height="7.8" fill="#4f4f53"/>
<text x="1178.55" y="187.70" font-size="8.2" font-weight="bold" fill="#cfcfd2" text-anchor="middle" textLength="18.91" lengthAdjust="spacingAndGlyphs" style="" filter="url(#ts)"  stroke="#cfcfd2" stroke-width="0.3">POLY</text>
<rect x="1132" y="168.6" width="16" height="15.2" fill="#1f1f22" stroke="#5a5a5e" stroke-width="0.7"/>
<path d="M1136.5,177 q1.8,-4 3.5,0 q1.8,4 3.5,0" fill="none" stroke="#eee" stroke-width="1.2"/>
<text x="1139.75" y="191.80" font-size="8.2" font-weight="bold" fill="#cfcfd2" text-anchor="middle" textLength="22.31" lengthAdjust="spacingAndGlyphs" style="" filter="url(#ts)"  stroke="#cfcfd2" stroke-width="0.3">WAVE</text>
<circle cx="1093.60" cy="202.90" r="2.5" fill="#f4f4f4"/>
<path d="M1102.5,204.2 V204.4 H1120.1 M1102.5,222.2 V223.5 H1120.1" fill="none" stroke="#444448" stroke-width="0.8"/>
<path d="M1096.84,219.94 A8.80,8.80 0 1 1 1108.16,219.94" fill="none" stroke="#55555b" stroke-width="2.4" stroke-linecap="butt"/>
<path d="M1096.84,219.94 A8.80,8.80 0 0 1 1093.70,213.20" fill="none" stroke="#5fd4a3" stroke-width="2.6" stroke-linecap="butt"/>
<circle cx="1102.50" cy="213.80" r="7.80" fill="#1d1d21"/>
<circle cx="1102.50" cy="213.20" r="6.90" fill="url(#kb)"/>
<line x1="1100.57" y1="213.20" x2="1096.43" y2="213.20" stroke="#efefef" stroke-width="1.60" stroke-linecap="butt"/>
<rect x="1120.10" y="199.40" width="68.60" height="14.60" fill="#1c1c1f"/>
<rect x="1120.10" y="198.40" width="68.60" height="13.60" fill="#39393d"/>
<rect x="1120.60" y="198.90" width="67.60" height="12.60" fill="none" stroke="#46464a" stroke-width="0.8"/>
<text x="1154.40" y="208.20" font-size="8.8" font-weight="bold" fill="#d2d2d4" text-anchor="middle" textLength="41.00" lengthAdjust="spacingAndGlyphs" style="" filter="url(#ts)" stroke="#dcdcde" stroke-width="0.05">OscA1Det</text>
<rect x="1120.10" y="216.00" width="68.60" height="14.60" fill="#1c1c1f"/>
<rect x="1120.10" y="215.00" width="68.60" height="13.60" fill="#39393d"/>
<rect x="1120.60" y="215.50" width="67.60" height="12.60" fill="none" stroke="#46464a" stroke-width="0.8"/>
<text x="1154.40" y="224.80" font-size="8.8" font-weight="bold" fill="#d2d2d4" text-anchor="middle" textLength="41.00" lengthAdjust="spacingAndGlyphs" style="" filter="url(#ts)" stroke="#dcdcde" stroke-width="0.05">OscA2Det</text>
<circle cx="1093.60" cy="240.50" r="2.5" fill="#7a7a7e"/>
<path d="M1102.5,241.3 V242.3 H1120.1 M1102.5,259.3 V261.2 H1120.1" fill="none" stroke="#444448" stroke-width="0.8"/>
<path d="M1096.84,257.04 A8.80,8.80 0 1 1 1108.16,257.04" fill="none" stroke="#55555b" stroke-width="2.4" stroke-linecap="butt"/>
<circle cx="1102.50" cy="250.90" r="7.80" fill="#1d1d21"/>
<circle cx="1102.50" cy="250.30" r="6.90" fill="url(#kb)"/>
<line x1="1101.39" y1="251.88" x2="1099.02" y2="255.27" stroke="#efefef" stroke-width="1.60" stroke-linecap="butt"/>
<rect x="1120.10" y="237.30" width="68.60" height="14.60" fill="#1c1c1f"/>
<rect x="1120.10" y="236.30" width="68.60" height="13.60" fill="#39393d"/>
<rect x="1120.60" y="236.80" width="67.60" height="12.60" fill="none" stroke="#46464a" stroke-width="0.8"/>
<text x="1154.40" y="246.10" font-size="8.8" font-weight="bold" fill="#d2d2d4" text-anchor="middle" textLength="33.03" lengthAdjust="spacingAndGlyphs" style="" filter="url(#ts)" stroke="#dcdcde" stroke-width="0.05">(assign)</text>
<rect x="1120.10" y="253.70" width="68.60" height="14.60" fill="#1c1c1f"/>
<rect x="1120.10" y="252.70" width="68.60" height="13.60" fill="#39393d"/>
<rect x="1120.60" y="253.20" width="67.60" height="12.60" fill="none" stroke="#46464a" stroke-width="0.8"/>
<text x="1154.40" y="262.50" font-size="8.8" font-weight="bold" fill="#d2d2d4" text-anchor="middle" textLength="33.03" lengthAdjust="spacingAndGlyphs" style="" filter="url(#ts)" stroke="#dcdcde" stroke-width="0.05">(assign)</text>
<rect x="1081.4" y="290.4" width="119.79999999999995" height="155.40000000000003" fill="#2f2f33" filter="url(#ps)"/>
<rect x="1081.4" y="445.80" width="119.79999999999995" height="1" fill="#8ad6b8" opacity="0.75"/>
<circle cx="1099.2" cy="305.8" r="3.7" fill="#c9c9cc"/>
<text x="1141.80" y="308.60" font-size="9.4" font-weight="bold" fill="#f2f2f2" text-anchor="middle" textLength="20.82" lengthAdjust="spacingAndGlyphs" style="" filter="url(#ts)"  stroke="#f2f2f2" stroke-width="0.3">LFO 2</text>
<rect x="1184.2" y="300.8" width="8.4" height="7.8" rx="2" fill="#48484c" filter="url(#ps)"/>
<text x="1188.40" y="307.30" font-size="6.8" font-weight="bold" fill="#e0e0e0" text-anchor="middle" textLength="4.41" lengthAdjust="spacingAndGlyphs" style="" filter="url(#ts)"  stroke="#e0e0e0" stroke-width="0.3">C</text>
<circle cx="1107.40" cy="334.40" r="9.30" fill="#1d1d21"/>
<circle cx="1107.40" cy="333.80" r="8.40" fill="url(#kbd)"/>
<text x="1107.70" y="353.50" font-size="8.2" font-weight="bold" fill="#cfcfd2" text-anchor="middle" textLength="19.98" lengthAdjust="spacingAndGlyphs" style="" filter="url(#ts)"  stroke="#cfcfd2" stroke-width="0.3">RATE</text>
<rect x="1130.00" y="323.00" width="7.6" height="7.6" fill="#1e1e21" opacity="0.7"/>
<rect x="1129.40" y="321.80" width="7.6" height="7.6" fill="#4f4f53"/>
<circle cx="1145.4" cy="325.8" r="3.6" fill="none" stroke="#eee" stroke-width="1"/><path d="M1145.4,323.3 V326.0 H1147.6" fill="none" stroke="#eee" stroke-width="0.9"/>
<rect x="1157.70" y="323.00" width="7.8" height="7.8" fill="#1e1e21" opacity="0.7"/>
<rect x="1157.10" y="321.80" width="7.8" height="7.8" fill="#d4eaf8"/>
<text x="1178.55" y="328.60" font-size="8.2" font-weight="bold" fill="#cfcfd2" text-anchor="middle" textLength="18.88" lengthAdjust="spacingAndGlyphs" style="" filter="url(#ts)"  stroke="#cfcfd2" stroke-width="0.3">FREE</text>
<rect x="1157.70" y="336.70" width="7.8" height="7.8" fill="#1e1e21" opacity="0.7"/>
<rect x="1157.10" y="335.50" width="7.8" height="7.8" fill="#4f4f53"/>
<text x="1180.00" y="342.10" font-size="8.2" font-weight="bold" fill="#cfcfd2" text-anchor="middle" textLength="21.81" lengthAdjust="spacingAndGlyphs" style="" filter="url(#ts)"  stroke="#cfcfd2" stroke-width="0.3">MONO</text>
<rect x="1157.70" y="349.80" width="7.8" height="7.8" fill="#1e1e21" opacity="0.7"/>
<rect x="1157.10" y="348.60" width="7.8" height="7.8" fill="#4f4f53"/>
<text x="1178.55" y="355.20" font-size="8.2" font-weight="bold" fill="#cfcfd2" text-anchor="middle" textLength="18.91" lengthAdjust="spacingAndGlyphs" style="" filter="url(#ts)"  stroke="#cfcfd2" stroke-width="0.3">POLY</text>
<rect x="1132" y="336.1" width="16" height="15.2" fill="#1f1f22" stroke="#5a5a5e" stroke-width="0.7"/>
<path d="M1140,343.7 c-1.5,-2.5 -4.5,-2.5 -4.5,0 c0,2.5 3,2.5 4.5,0 c1.5,-2.5 4.5,-2.5 4.5,0 c0,2.5 -3,2.5 -4.5,0 Z" fill="none" stroke="#eee" stroke-width="1.4"/>
<text x="1139.75" y="359.30" font-size="8.2" font-weight="bold" fill="#cfcfd2" text-anchor="middle" textLength="22.31" lengthAdjust="spacingAndGlyphs" style="" filter="url(#ts)"  stroke="#cfcfd2" stroke-width="0.3">WAVE</text>
<circle cx="1093.60" cy="370.40" r="2.5" fill="#f4f4f4"/>
<path d="M1102.5,371.7 V371.9 H1120.1 M1102.5,389.7 V391.0 H1120.1" fill="none" stroke="#444448" stroke-width="0.8"/>
<path d="M1096.84,387.44 A8.80,8.80 0 1 1 1108.16,387.44" fill="none" stroke="#55555b" stroke-width="2.4" stroke-linecap="butt"/>
<path d="M1096.84,387.44 A8.80,8.80 0 0 1 1095.76,386.36" fill="none" stroke="#5fd4a3" stroke-width="2.6" stroke-linecap="butt"/>
<circle cx="1102.50" cy="381.30" r="7.80" fill="#1d1d21"/>
<circle cx="1102.50" cy="380.70" r="6.90" fill="url(#kb)"/>
<line x1="1101.13" y1="382.07" x2="1098.21" y2="384.99" stroke="#efefef" stroke-width="1.60" stroke-linecap="butt"/>
<rect x="1120.10" y="366.90" width="68.60" height="14.60" fill="#1c1c1f"/>
<rect x="1120.10" y="365.90" width="68.60" height="13.60" fill="#39393d"/>
<rect x="1120.60" y="366.40" width="67.60" height="12.60" fill="none" stroke="#46464a" stroke-width="0.8"/>
<text x="1154.40" y="375.70" font-size="8.8" font-weight="bold" fill="#d2d2d4" text-anchor="middle" textLength="45.41" lengthAdjust="spacingAndGlyphs" style="" filter="url(#ts)" stroke="#dcdcde" stroke-width="0.05">OscB2Sem</text>
<rect x="1120.10" y="383.50" width="68.60" height="14.60" fill="#1c1c1f"/>
<rect x="1120.10" y="382.50" width="68.60" height="13.60" fill="#39393d"/>
<rect x="1120.60" y="383.00" width="67.60" height="12.60" fill="none" stroke="#46464a" stroke-width="0.8"/>
<text x="1154.40" y="392.30" font-size="8.8" font-weight="bold" fill="#d2d2d4" text-anchor="middle" textLength="33.03" lengthAdjust="spacingAndGlyphs" style="" filter="url(#ts)" stroke="#dcdcde" stroke-width="0.05">(assign)</text>
<circle cx="1093.60" cy="408.00" r="2.5" fill="#7a7a7e"/>
<path d="M1102.5,408.8 V409.8 H1120.1 M1102.5,426.8 V428.7 H1120.1" fill="none" stroke="#444448" stroke-width="0.8"/>
<path d="M1096.84,424.54 A8.80,8.80 0 1 1 1108.16,424.54" fill="none" stroke="#55555b" stroke-width="2.4" stroke-linecap="butt"/>
<circle cx="1102.50" cy="418.40" r="7.80" fill="#1d1d21"/>
<circle cx="1102.50" cy="417.80" r="6.90" fill="url(#kb)"/>
<line x1="1101.26" y1="419.28" x2="1098.60" y2="422.45" stroke="#efefef" stroke-width="1.60" stroke-linecap="butt"/>
<rect x="1120.10" y="404.80" width="68.60" height="14.60" fill="#1c1c1f"/>
<rect x="1120.10" y="403.80" width="68.60" height="13.60" fill="#39393d"/>
<rect x="1120.60" y="404.30" width="67.60" height="12.60" fill="none" stroke="#46464a" stroke-width="0.8"/>
<text x="1154.40" y="413.60" font-size="8.8" font-weight="bold" fill="#d2d2d4" text-anchor="middle" textLength="33.03" lengthAdjust="spacingAndGlyphs" style="" filter="url(#ts)" stroke="#dcdcde" stroke-width="0.05">(assign)</text>
<rect x="1120.10" y="421.20" width="68.60" height="14.60" fill="#1c1c1f"/>
<rect x="1120.10" y="420.20" width="68.60" height="13.60" fill="#39393d"/>
<rect x="1120.60" y="420.70" width="67.60" height="12.60" fill="none" stroke="#46464a" stroke-width="0.8"/>
<text x="1154.40" y="430.00" font-size="8.8" font-weight="bold" fill="#d2d2d4" text-anchor="middle" textLength="33.03" lengthAdjust="spacingAndGlyphs" style="" filter="url(#ts)" stroke="#dcdcde" stroke-width="0.05">(assign)</text>
<rect x="1081.4" y="457.9" width="119.79999999999995" height="155.39999999999998" fill="#2f2f33" filter="url(#ps)"/>
<rect x="1081.4" y="613.30" width="119.79999999999995" height="1" fill="#8ad6b8" opacity="0.75"/>
<circle cx="1099.2" cy="473.3" r="3.7" fill="#a9a9ad"/>
<text x="1141.80" y="476.10" font-size="9.4" font-weight="bold" fill="#f2f2f2" text-anchor="middle" textLength="20.82" lengthAdjust="spacingAndGlyphs" style="" filter="url(#ts)"  stroke="#f2f2f2" stroke-width="0.3">LFO 3</text>
<rect x="1184.2" y="468.3" width="8.4" height="7.8" rx="2" fill="#48484c" filter="url(#ps)"/>
<text x="1188.40" y="474.80" font-size="6.8" font-weight="bold" fill="#e0e0e0" text-anchor="middle" textLength="4.41" lengthAdjust="spacingAndGlyphs" style="" filter="url(#ts)"  stroke="#e0e0e0" stroke-width="0.3">C</text>
<path d="M1100.97,508.96 A10.00,10.00 0 1 1 1113.83,508.96" fill="none" stroke="#55555b" stroke-width="2.6" stroke-linecap="butt"/>
<path d="M1100.97,508.96 A10.00,10.00 0 0 1 1097.74,503.89" fill="none" stroke="#5fd4a3" stroke-width="2.8000000000000003" stroke-linecap="butt"/>
<circle cx="1107.40" cy="501.90" r="8.70" fill="#1d1d21"/>
<circle cx="1107.40" cy="501.30" r="7.80" fill="url(#kb)"/>
<line x1="1105.42" y1="500.38" x2="1101.18" y2="498.40" stroke="#efefef" stroke-width="1.60" stroke-linecap="butt"/>
<text x="1107.70" y="521.00" font-size="8.2" font-weight="bold" fill="#cfcfd2" text-anchor="middle" textLength="19.98" lengthAdjust="spacingAndGlyphs" style="" filter="url(#ts)"  stroke="#cfcfd2" stroke-width="0.3">RATE</text>
<rect x="1130.00" y="490.50" width="7.6" height="7.6" fill="#1e1e21" opacity="0.7"/>
<rect x="1129.40" y="489.30" width="7.6" height="7.6" fill="#4f4f53"/>
<circle cx="1145.4" cy="493.3" r="3.6" fill="none" stroke="#eee" stroke-width="1"/><path d="M1145.4,490.8 V493.5 H1147.6" fill="none" stroke="#eee" stroke-width="0.9"/>
<rect x="1157.70" y="490.50" width="7.8" height="7.8" fill="#1e1e21" opacity="0.7"/>
<rect x="1157.10" y="489.30" width="7.8" height="7.8" fill="#d4eaf8"/>
<text x="1178.55" y="496.10" font-size="8.2" font-weight="bold" fill="#cfcfd2" text-anchor="middle" textLength="18.88" lengthAdjust="spacingAndGlyphs" style="" filter="url(#ts)"  stroke="#cfcfd2" stroke-width="0.3">FREE</text>
<rect x="1157.70" y="504.20" width="7.8" height="7.8" fill="#1e1e21" opacity="0.7"/>
<rect x="1157.10" y="503.00" width="7.8" height="7.8" fill="#4f4f53"/>
<text x="1180.00" y="509.60" font-size="8.2" font-weight="bold" fill="#cfcfd2" text-anchor="middle" textLength="21.81" lengthAdjust="spacingAndGlyphs" style="" filter="url(#ts)"  stroke="#cfcfd2" stroke-width="0.3">MONO</text>
<rect x="1157.70" y="517.30" width="7.8" height="7.8" fill="#1e1e21" opacity="0.7"/>
<rect x="1157.10" y="516.10" width="7.8" height="7.8" fill="#4f4f53"/>
<text x="1178.55" y="522.70" font-size="8.2" font-weight="bold" fill="#cfcfd2" text-anchor="middle" textLength="18.91" lengthAdjust="spacingAndGlyphs" style="" filter="url(#ts)"  stroke="#cfcfd2" stroke-width="0.3">POLY</text>
<rect x="1132" y="503.6" width="16" height="15.2" fill="#1f1f22" stroke="#5a5a5e" stroke-width="0.7"/>
<path d="M1136.5,512 q1.8,-4 3.5,0 q1.8,4 3.5,0" fill="none" stroke="#eee" stroke-width="1.2"/>
<text x="1139.75" y="526.80" font-size="8.2" font-weight="bold" fill="#cfcfd2" text-anchor="middle" textLength="22.31" lengthAdjust="spacingAndGlyphs" style="" filter="url(#ts)"  stroke="#cfcfd2" stroke-width="0.3">WAVE</text>
<circle cx="1093.60" cy="537.90" r="2.5" fill="#7a7a7e"/>
<path d="M1102.5,539.2 V539.4 H1120.1 M1102.5,557.2 V558.5 H1120.1" fill="none" stroke="#444448" stroke-width="0.8"/>
<path d="M1096.84,554.94 A8.80,8.80 0 1 1 1108.16,554.94" fill="none" stroke="#55555b" stroke-width="2.4" stroke-linecap="butt"/>
<circle cx="1102.50" cy="548.80" r="7.80" fill="#1d1d21"/>
<circle cx="1102.50" cy="548.20" r="6.90" fill="url(#kb)"/>
<line x1="1101.26" y1="549.68" x2="1098.60" y2="552.85" stroke="#efefef" stroke-width="1.60" stroke-linecap="butt"/>
<rect x="1120.10" y="534.40" width="68.60" height="14.60" fill="#1c1c1f"/>
<rect x="1120.10" y="533.40" width="68.60" height="13.60" fill="#39393d"/>
<rect x="1120.60" y="533.90" width="67.60" height="12.60" fill="none" stroke="#46464a" stroke-width="0.8"/>
<text x="1154.40" y="543.20" font-size="8.8" font-weight="bold" fill="#d2d2d4" text-anchor="middle" textLength="33.03" lengthAdjust="spacingAndGlyphs" style="" filter="url(#ts)" stroke="#dcdcde" stroke-width="0.05">(assign)</text>
<rect x="1120.10" y="551.00" width="68.60" height="14.60" fill="#1c1c1f"/>
<rect x="1120.10" y="550.00" width="68.60" height="13.60" fill="#39393d"/>
<rect x="1120.60" y="550.50" width="67.60" height="12.60" fill="none" stroke="#46464a" stroke-width="0.8"/>
<text x="1154.40" y="559.80" font-size="8.8" font-weight="bold" fill="#d2d2d4" text-anchor="middle" textLength="33.03" lengthAdjust="spacingAndGlyphs" style="" filter="url(#ts)" stroke="#dcdcde" stroke-width="0.05">(assign)</text>
<circle cx="1093.60" cy="575.50" r="2.5" fill="#7a7a7e"/>
<path d="M1102.5,576.3 V577.3 H1120.1 M1102.5,594.3 V596.2 H1120.1" fill="none" stroke="#444448" stroke-width="0.8"/>
<path d="M1096.84,592.04 A8.80,8.80 0 1 1 1108.16,592.04" fill="none" stroke="#55555b" stroke-width="2.4" stroke-linecap="butt"/>
<circle cx="1102.50" cy="585.90" r="7.80" fill="#1d1d21"/>
<circle cx="1102.50" cy="585.30" r="6.90" fill="url(#kb)"/>
<line x1="1101.26" y1="586.78" x2="1098.60" y2="589.95" stroke="#efefef" stroke-width="1.60" stroke-linecap="butt"/>
<rect x="1120.10" y="572.30" width="68.60" height="14.60" fill="#1c1c1f"/>
<rect x="1120.10" y="571.30" width="68.60" height="13.60" fill="#39393d"/>
<rect x="1120.60" y="571.80" width="67.60" height="12.60" fill="none" stroke="#46464a" stroke-width="0.8"/>
<text x="1154.40" y="581.10" font-size="8.8" font-weight="bold" fill="#d2d2d4" text-anchor="middle" textLength="33.03" lengthAdjust="spacingAndGlyphs" style="" filter="url(#ts)" stroke="#dcdcde" stroke-width="0.05">(assign)</text>
<rect x="1120.10" y="588.70" width="68.60" height="14.60" fill="#1c1c1f"/>
<rect x="1120.10" y="587.70" width="68.60" height="13.60" fill="#39393d"/>
<rect x="1120.60" y="588.20" width="67.60" height="12.60" fill="none" stroke="#46464a" stroke-width="0.8"/>
<text x="1154.40" y="597.50" font-size="8.8" font-weight="bold" fill="#d2d2d4" text-anchor="middle" textLength="33.03" lengthAdjust="spacingAndGlyphs" style="" filter="url(#ts)" stroke="#dcdcde" stroke-width="0.05">(assign)</text>
</svg></body></html>
